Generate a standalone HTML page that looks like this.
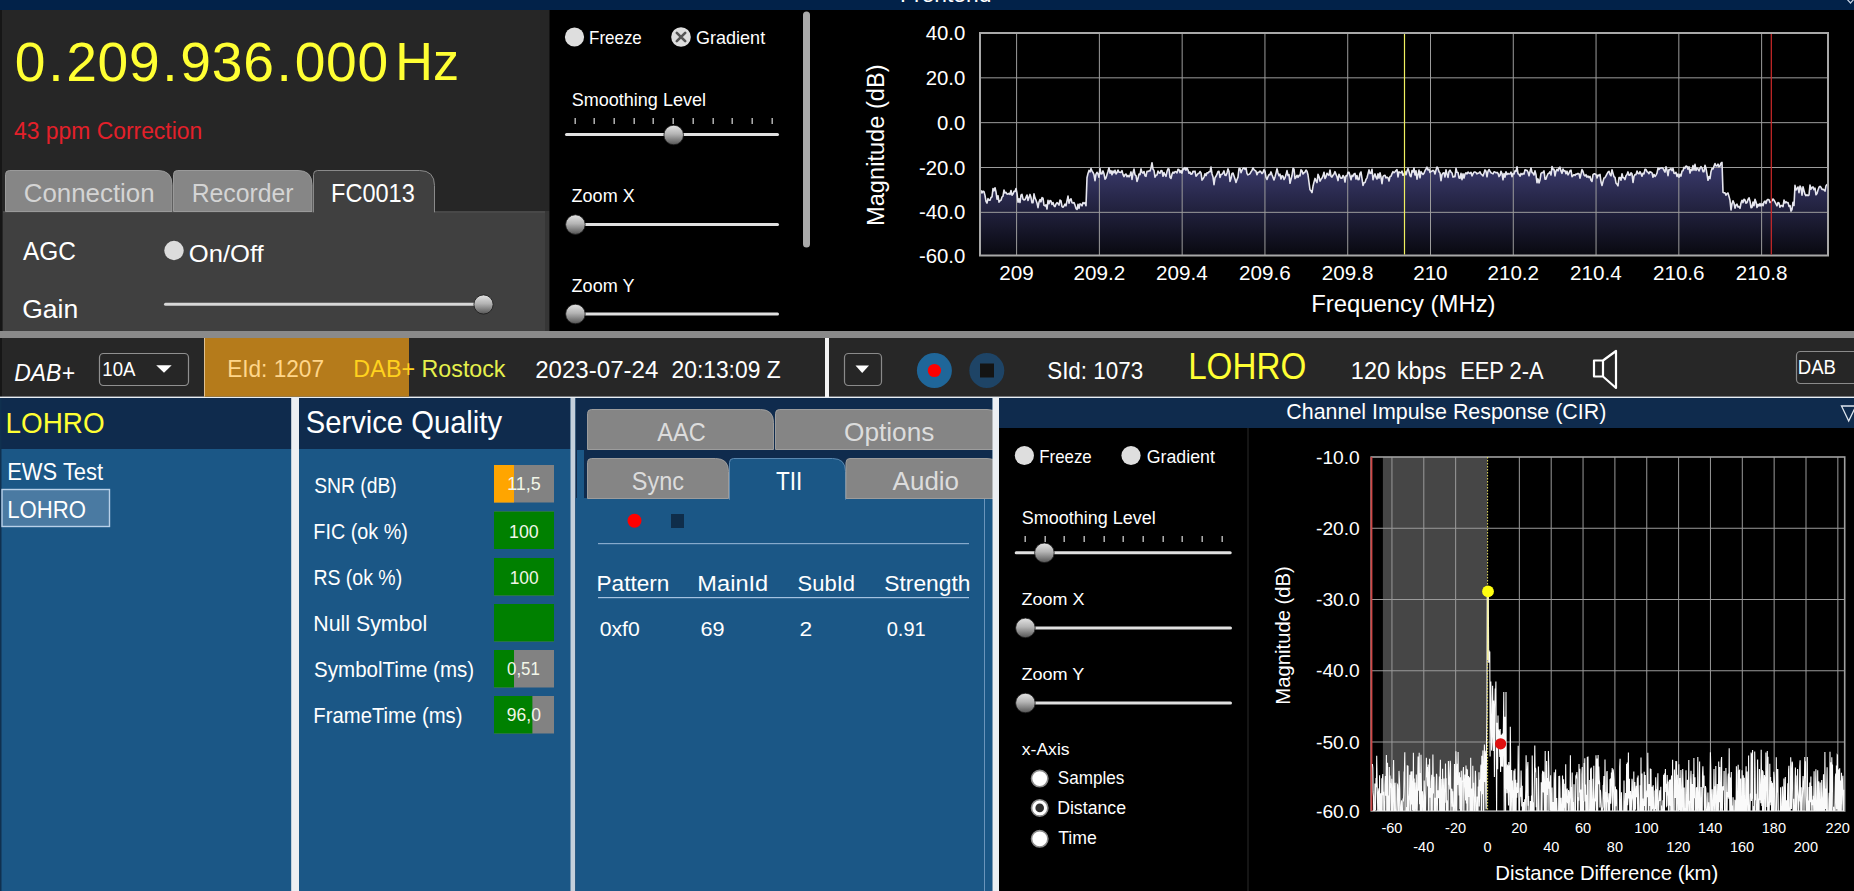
<!DOCTYPE html>
<html><head><meta charset="utf-8"><title>DAB</title>
<style>
html,body{margin:0;padding:0;background:#000;overflow:hidden;}
svg{display:block;font-family:"Liberation Sans",sans-serif;}
</style></head><body>
<svg width="1854" height="891" viewBox="0 0 1854 891">
<defs>
<linearGradient id="knob" x1="0" y1="0" x2="0" y2="1">
<stop offset="0" stop-color="#e4e4e4"/><stop offset="0.45" stop-color="#b4b4b4"/><stop offset="1" stop-color="#555555"/>
</linearGradient>
<linearGradient id="specfill" gradientUnits="userSpaceOnUse" x1="0" y1="165" x2="0" y2="256">
<stop offset="0" stop-color="#3a3a6c"/><stop offset="1" stop-color="#08080f"/>
</linearGradient>
</defs>
<rect x="0" y="0" width="1854" height="10" fill="#022249" />
<text x="900.12" y="2.00" font-size="21.80" fill="#ffffff" textLength="91.31" lengthAdjust="spacingAndGlyphs" style="">Frontend</text>
<path d="M1845,-3 L1856,-3 L1850.5,3 Z" fill="none" stroke="#c8d4e4" stroke-width="1.2"/>
<rect x="0" y="10" width="550" height="321" fill="#262626" />
<rect x="0" y="10" width="2" height="321" fill="#161616" />
<text x="30.1" y="80.6" font-size="55.2" fill="#ffff33" text-anchor="middle">0</text>
<text x="55.9" y="80.6" font-size="55.2" fill="#ffff33" text-anchor="middle">.</text>
<text x="81.5" y="80.6" font-size="55.2" fill="#ffff33" text-anchor="middle">2</text>
<text x="112.9" y="80.6" font-size="55.2" fill="#ffff33" text-anchor="middle">0</text>
<text x="144.3" y="80.6" font-size="55.2" fill="#ffff33" text-anchor="middle">9</text>
<text x="169.9" y="80.6" font-size="55.2" fill="#ffff33" text-anchor="middle">.</text>
<text x="195.7" y="80.6" font-size="55.2" fill="#ffff33" text-anchor="middle">9</text>
<text x="227.1" y="80.6" font-size="55.2" fill="#ffff33" text-anchor="middle">3</text>
<text x="258.7" y="80.6" font-size="55.2" fill="#ffff33" text-anchor="middle">6</text>
<text x="284.2" y="80.6" font-size="55.2" fill="#ffff33" text-anchor="middle">.</text>
<text x="310.0" y="80.6" font-size="55.2" fill="#ffff33" text-anchor="middle">0</text>
<text x="341.4" y="80.6" font-size="55.2" fill="#ffff33" text-anchor="middle">0</text>
<text x="372.8" y="80.6" font-size="55.2" fill="#ffff33" text-anchor="middle">0</text>
<text x="395.29" y="80.00" font-size="53.78" fill="#ffff33" textLength="63.80" lengthAdjust="spacingAndGlyphs" style="">Hz</text>
<text x="14.09" y="139.00" font-size="23.98" fill="#e3202a" textLength="188.07" lengthAdjust="spacingAndGlyphs" style="">43 ppm Correction</text>
<rect x="3" y="211" width="542" height="120" fill="#404040" />
<rect x="545" y="211" width="4.5" height="120" fill="#363636" />
<rect x="3" y="211" width="542" height="2" fill="#484848" />
<path d="M5.5,211.5 L5.5,174.5 Q5.5,170.5 9.5,170.5 L158,170.5 Q172,170.5 172,184.5 L172,211.5 Z" fill="#868686" stroke="#9a9a9a" stroke-width="1"/>
<path d="M173.5,211.5 L173.5,174.5 Q173.5,170.5 177.5,170.5 L298,170.5 Q312,170.5 312,184.5 L312,211.5 Z" fill="#868686" stroke="#9a9a9a" stroke-width="1"/>
<path d="M313.5,212 L313.5,174.5 Q313.5,170.5 317.5,170.5 L419.5,170.5 Q434.5,170.5 434.5,185.5 L434.5,212 Z" fill="#404040" stroke="#8a8a8a" stroke-width="1"/>
<rect x="314" y="209" width="120" height="5" fill="#404040" />
<text x="23.71" y="202.00" font-size="25.44" fill="#d4d4d4" textLength="130.96" lengthAdjust="spacingAndGlyphs" style="">Connection</text>
<text x="191.66" y="202.00" font-size="25.44" fill="#d4d4d4" textLength="101.93" lengthAdjust="spacingAndGlyphs" style="">Recorder</text>
<text x="331.06" y="202.00" font-size="25.44" fill="#ffffff" textLength="83.75" lengthAdjust="spacingAndGlyphs" style="">FC0013</text>
<text x="22.94" y="259.50" font-size="26.16" fill="#ffffff" textLength="52.97" lengthAdjust="spacingAndGlyphs" style="">AGC</text>
<circle cx="174" cy="250.5" r="9.7" fill="#dcdcdc" />
<text x="188.78" y="262.00" font-size="24.71" fill="#ffffff" textLength="74.95" lengthAdjust="spacingAndGlyphs" style="">On/Off</text>
<text x="22.17" y="318.20" font-size="26.02" fill="#ffffff" textLength="56.05" lengthAdjust="spacingAndGlyphs" style="">Gain</text>
<rect x="164" y="302.8" width="316" height="3" fill="#d8d8d8" rx="1.5"/>
<circle cx="483.5" cy="304.5" r="9.6" fill="url(#knob)" stroke="#1c1c1c" stroke-width="0.8"/>
<rect x="549.5" y="10" width="1304.5" height="321" fill="#000000" />
<circle cx="574.5" cy="37" r="9.6" fill="#dedede" />
<text x="589.10" y="43.80" font-size="18.31" fill="#fff" textLength="52.66" lengthAdjust="spacingAndGlyphs" style="">Freeze</text>
<circle cx="681" cy="37" r="9.8" fill="#dedede" />
<path d="M676.8,32.8 L685.2,41.2 M685.2,32.8 L676.8,41.2" stroke="#555" stroke-width="2.6" stroke-linecap="round"/>
<text x="696.10" y="43.80" font-size="18.31" fill="#fff" textLength="69.05" lengthAdjust="spacingAndGlyphs" style="">Gradient</text>
<text x="571.69" y="105.90" font-size="18.31" fill="#fff" textLength="134.32" lengthAdjust="spacingAndGlyphs" style="">Smoothing Level</text>
<rect x="574.5" y="118" width="1.4" height="6" fill="#bdbdbd" />
<rect x="593.5" y="118" width="1.4" height="6" fill="#bdbdbd" />
<rect x="613.5" y="118" width="1.4" height="6" fill="#bdbdbd" />
<rect x="633.5" y="118" width="1.4" height="6" fill="#bdbdbd" />
<rect x="652.5" y="118" width="1.4" height="6" fill="#bdbdbd" />
<rect x="672.5" y="118" width="1.4" height="6" fill="#bdbdbd" />
<rect x="692.5" y="118" width="1.4" height="6" fill="#bdbdbd" />
<rect x="712.5" y="118" width="1.4" height="6" fill="#bdbdbd" />
<rect x="731.5" y="118" width="1.4" height="6" fill="#bdbdbd" />
<rect x="751.5" y="118" width="1.4" height="6" fill="#bdbdbd" />
<rect x="771.5" y="118" width="1.4" height="6" fill="#bdbdbd" />
<rect x="565" y="133" width="214" height="3" fill="#e0e0e0" rx="1.5"/>
<circle cx="673.7" cy="135" r="9.8" fill="url(#knob)" stroke="#1c1c1c" stroke-width="0.8"/>
<text x="571.61" y="201.90" font-size="17.44" fill="#fff" textLength="63.06" lengthAdjust="spacingAndGlyphs" style="">Zoom X</text>
<rect x="575" y="223" width="204" height="3" fill="#e0e0e0" rx="1.5"/>
<circle cx="575.4" cy="224.6" r="9.8" fill="url(#knob)" stroke="#1c1c1c" stroke-width="0.8"/>
<text x="571.61" y="291.70" font-size="17.44" fill="#fff" textLength="62.80" lengthAdjust="spacingAndGlyphs" style="">Zoom Y</text>
<rect x="575" y="312.5" width="204" height="3" fill="#e0e0e0" rx="1.5"/>
<circle cx="575.4" cy="314" r="9.8" fill="url(#knob)" stroke="#1c1c1c" stroke-width="0.8"/>
<rect x="803" y="11.5" width="7" height="236" fill="#a9a9a9" rx="3.5"/>
<path d="M980.0,194.3 L981.0,190.7 L982.0,192.9 L983.0,191.2 L984.0,191.8 L985.0,195.4 L986.0,201.4 L987.0,203.1 L988.0,198.6 L989.0,200.1 L990.0,200.2 L991.0,197.5 L992.0,196.8 L993.0,188.5 L994.0,190.8 L995.0,187.7 L996.0,191.9 L997.0,199.2 L998.0,195.7 L999.0,202.1 L1000.0,200.7 L1001.0,200.3 L1002.0,197.0 L1003.0,196.1 L1004.0,190.0 L1005.0,192.9 L1006.0,192.4 L1007.0,194.0 L1008.0,194.1 L1009.0,193.4 L1010.0,194.5 L1011.0,190.5 L1012.0,195.2 L1013.0,194.0 L1014.0,191.4 L1015.0,191.5 L1016.0,188.5 L1017.0,193.3 L1018.0,202.2 L1019.0,198.8 L1020.0,202.5 L1021.0,195.2 L1022.0,194.3 L1023.0,199.1 L1024.0,200.0 L1025.0,199.6 L1026.0,197.4 L1027.0,195.0 L1028.0,200.5 L1029.0,197.5 L1030.0,194.4 L1031.0,197.6 L1032.0,202.8 L1033.0,202.6 L1034.0,193.9 L1035.0,198.1 L1036.0,200.2 L1037.0,203.1 L1038.0,207.6 L1039.0,202.1 L1040.0,199.6 L1041.0,201.8 L1042.0,197.6 L1043.0,198.2 L1044.0,205.4 L1045.0,205.9 L1046.0,204.8 L1047.0,209.0 L1048.0,200.4 L1049.0,203.7 L1050.0,200.5 L1051.0,200.9 L1052.0,204.5 L1053.0,202.5 L1054.0,205.8 L1055.0,206.6 L1056.0,204.0 L1057.0,202.6 L1058.0,203.6 L1059.0,205.2 L1060.0,200.0 L1061.0,200.9 L1062.0,206.6 L1063.0,207.2 L1064.0,205.9 L1065.0,204.2 L1066.0,205.9 L1067.0,200.8 L1068.0,196.1 L1069.0,203.2 L1070.0,199.8 L1071.0,198.8 L1072.0,202.7 L1073.0,203.0 L1074.0,202.6 L1075.0,205.1 L1076.0,208.6 L1077.0,209.5 L1078.0,204.3 L1079.0,208.4 L1080.0,203.9 L1081.0,204.3 L1082.0,205.9 L1083.0,202.5 L1084.0,203.5 L1085.0,202.7 L1086.0,205.7 L1087.0,177.8 L1088.0,173.4 L1089.0,170.4 L1090.0,171.9 L1091.0,168.5 L1092.0,171.1 L1093.0,172.4 L1094.0,174.8 L1095.0,180.6 L1096.0,174.2 L1097.0,172.3 L1098.0,173.9 L1099.0,177.2 L1100.0,168.6 L1101.0,173.9 L1102.0,173.8 L1103.0,170.9 L1104.0,173.8 L1105.0,179.1 L1106.0,178.0 L1107.0,174.5 L1108.0,171.3 L1109.0,167.8 L1110.0,173.2 L1111.0,170.7 L1112.0,174.7 L1113.0,171.0 L1114.0,172.8 L1115.0,170.3 L1116.0,173.9 L1117.0,172.6 L1118.0,170.1 L1119.0,172.1 L1120.0,172.2 L1121.0,172.4 L1122.0,170.6 L1123.0,174.6 L1124.0,176.6 L1125.0,174.6 L1126.0,174.0 L1127.0,176.7 L1128.0,175.4 L1129.0,176.8 L1130.0,175.1 L1131.0,171.9 L1132.0,179.5 L1133.0,172.7 L1134.0,169.1 L1135.0,174.9 L1136.0,175.6 L1137.0,181.4 L1138.0,178.4 L1139.0,174.0 L1140.0,174.6 L1141.0,168.9 L1142.0,172.3 L1143.0,173.1 L1144.0,171.5 L1145.0,175.8 L1146.0,176.3 L1147.0,171.3 L1148.0,171.5 L1149.0,170.8 L1150.0,170.9 L1151.0,168.0 L1152.0,162.7 L1153.0,169.2 L1154.0,170.5 L1155.0,177.2 L1156.0,175.3 L1157.0,175.0 L1158.0,171.0 L1159.0,172.9 L1160.0,173.1 L1161.0,170.6 L1162.0,170.8 L1163.0,176.3 L1164.0,172.5 L1165.0,174.8 L1166.0,176.4 L1167.0,171.6 L1168.0,168.8 L1169.0,169.0 L1170.0,177.5 L1171.0,178.4 L1172.0,174.2 L1173.0,172.2 L1174.0,173.1 L1175.0,171.6 L1176.0,171.7 L1177.0,172.9 L1178.0,169.2 L1179.0,169.8 L1180.0,172.6 L1181.0,170.6 L1182.0,173.1 L1183.0,168.5 L1184.0,169.3 L1185.0,167.7 L1186.0,170.1 L1187.0,167.9 L1188.0,170.1 L1189.0,173.3 L1190.0,172.1 L1191.0,174.3 L1192.0,174.0 L1193.0,171.4 L1194.0,171.6 L1195.0,171.1 L1196.0,176.2 L1197.0,175.1 L1198.0,173.6 L1199.0,173.4 L1200.0,171.5 L1201.0,172.9 L1202.0,180.1 L1203.0,178.8 L1204.0,177.1 L1205.0,173.7 L1206.0,175.6 L1207.0,172.9 L1208.0,172.9 L1209.0,171.7 L1210.0,171.8 L1211.0,167.0 L1212.0,173.9 L1213.0,176.9 L1214.0,184.7 L1215.0,177.8 L1216.0,176.3 L1217.0,174.2 L1218.0,171.6 L1219.0,171.4 L1220.0,177.4 L1221.0,174.5 L1222.0,174.3 L1223.0,173.0 L1224.0,170.9 L1225.0,175.2 L1226.0,175.5 L1227.0,173.0 L1228.0,168.7 L1229.0,171.5 L1230.0,181.4 L1231.0,178.6 L1232.0,173.4 L1233.0,173.1 L1234.0,176.0 L1235.0,179.1 L1236.0,182.5 L1237.0,179.5 L1238.0,177.1 L1239.0,168.5 L1240.0,168.5 L1241.0,172.6 L1242.0,170.1 L1243.0,168.5 L1244.0,167.8 L1245.0,169.4 L1246.0,168.0 L1247.0,173.6 L1248.0,174.9 L1249.0,174.4 L1250.0,173.6 L1251.0,171.8 L1252.0,170.4 L1253.0,167.8 L1254.0,169.7 L1255.0,170.5 L1256.0,171.2 L1257.0,174.8 L1258.0,172.4 L1259.0,172.2 L1260.0,171.1 L1261.0,172.0 L1262.0,173.6 L1263.0,172.4 L1264.0,169.7 L1265.0,171.5 L1266.0,177.3 L1267.0,179.5 L1268.0,176.7 L1269.0,174.6 L1270.0,174.6 L1271.0,171.9 L1272.0,174.8 L1273.0,177.4 L1274.0,180.0 L1275.0,176.9 L1276.0,173.1 L1277.0,168.8 L1278.0,172.9 L1279.0,175.7 L1280.0,174.1 L1281.0,179.0 L1282.0,175.7 L1283.0,176.3 L1284.0,179.5 L1285.0,177.9 L1286.0,174.6 L1287.0,170.6 L1288.0,175.5 L1289.0,174.6 L1290.0,183.3 L1291.0,179.2 L1292.0,175.5 L1293.0,168.3 L1294.0,169.1 L1295.0,178.6 L1296.0,177.4 L1297.0,175.3 L1298.0,177.3 L1299.0,175.4 L1300.0,175.8 L1301.0,169.7 L1302.0,170.7 L1303.0,174.0 L1304.0,172.7 L1305.0,172.1 L1306.0,170.0 L1307.0,171.2 L1308.0,175.0 L1309.0,182.3 L1310.0,189.8 L1311.0,190.8 L1312.0,192.6 L1313.0,186.3 L1314.0,182.1 L1315.0,178.4 L1316.0,180.9 L1317.0,182.6 L1318.0,174.4 L1319.0,176.5 L1320.0,181.1 L1321.0,179.3 L1322.0,178.1 L1323.0,175.9 L1324.0,172.2 L1325.0,178.5 L1326.0,176.8 L1327.0,173.2 L1328.0,174.6 L1329.0,175.3 L1330.0,170.0 L1331.0,176.3 L1332.0,177.1 L1333.0,175.2 L1334.0,173.9 L1335.0,171.7 L1336.0,174.4 L1337.0,176.7 L1338.0,180.6 L1339.0,174.2 L1340.0,176.6 L1341.0,178.3 L1342.0,178.1 L1343.0,175.6 L1344.0,176.8 L1345.0,182.0 L1346.0,175.7 L1347.0,175.9 L1348.0,172.2 L1349.0,172.2 L1350.0,175.8 L1351.0,179.7 L1352.0,175.4 L1353.0,176.3 L1354.0,173.9 L1355.0,173.4 L1356.0,179.0 L1357.0,175.6 L1358.0,179.6 L1359.0,179.5 L1360.0,173.5 L1361.0,172.0 L1362.0,178.7 L1363.0,185.4 L1364.0,182.8 L1365.0,182.5 L1366.0,179.4 L1367.0,177.8 L1368.0,173.9 L1369.0,169.9 L1370.0,173.5 L1371.0,173.3 L1372.0,169.3 L1373.0,179.7 L1374.0,176.2 L1375.0,173.9 L1376.0,177.3 L1377.0,179.0 L1378.0,173.9 L1379.0,178.1 L1380.0,172.8 L1381.0,177.2 L1382.0,183.7 L1383.0,176.5 L1384.0,175.5 L1385.0,175.4 L1386.0,177.9 L1387.0,177.3 L1388.0,177.8 L1389.0,181.0 L1390.0,176.6 L1391.0,176.3 L1392.0,173.6 L1393.0,171.7 L1394.0,172.7 L1395.0,171.7 L1396.0,170.6 L1397.0,169.7 L1398.0,176.9 L1399.0,171.9 L1400.0,172.4 L1401.0,172.8 L1402.0,171.2 L1403.0,175.3 L1404.0,174.9 L1405.0,171.4 L1406.0,174.8 L1407.0,171.1 L1408.0,168.5 L1409.0,171.6 L1410.0,175.6 L1411.0,176.7 L1412.0,170.6 L1413.0,172.0 L1414.0,168.1 L1415.0,175.0 L1416.0,170.9 L1417.0,179.1 L1418.0,174.6 L1419.0,170.1 L1420.0,177.8 L1421.0,171.6 L1422.0,173.3 L1423.0,174.4 L1424.0,173.2 L1425.0,170.7 L1426.0,169.0 L1427.0,167.2 L1428.0,170.0 L1429.0,169.1 L1430.0,172.4 L1431.0,171.4 L1432.0,171.2 L1433.0,170.4 L1434.0,171.1 L1435.0,174.0 L1436.0,170.0 L1437.0,167.0 L1438.0,168.5 L1439.0,171.7 L1440.0,172.9 L1441.0,180.7 L1442.0,174.5 L1443.0,173.1 L1444.0,172.9 L1445.0,177.0 L1446.0,169.9 L1447.0,173.9 L1448.0,177.4 L1449.0,171.5 L1450.0,170.1 L1451.0,172.1 L1452.0,173.0 L1453.0,177.1 L1454.0,176.6 L1455.0,176.7 L1456.0,168.4 L1457.0,172.3 L1458.0,172.5 L1459.0,177.9 L1460.0,178.3 L1461.0,173.4 L1462.0,179.7 L1463.0,173.9 L1464.0,178.0 L1465.0,174.0 L1466.0,172.8 L1467.0,173.9 L1468.0,172.0 L1469.0,173.1 L1470.0,173.5 L1471.0,172.3 L1472.0,175.9 L1473.0,173.9 L1474.0,172.0 L1475.0,172.0 L1476.0,172.6 L1477.0,173.9 L1478.0,173.3 L1479.0,172.9 L1480.0,171.9 L1481.0,174.0 L1482.0,174.8 L1483.0,176.0 L1484.0,173.1 L1485.0,169.9 L1486.0,171.3 L1487.0,176.8 L1488.0,171.4 L1489.0,169.5 L1490.0,171.3 L1491.0,172.8 L1492.0,173.4 L1493.0,173.9 L1494.0,171.8 L1495.0,172.0 L1496.0,172.8 L1497.0,172.4 L1498.0,173.3 L1499.0,176.6 L1500.0,175.3 L1501.0,171.3 L1502.0,173.5 L1503.0,179.8 L1504.0,173.6 L1505.0,177.1 L1506.0,171.7 L1507.0,174.6 L1508.0,173.4 L1509.0,174.1 L1510.0,173.8 L1511.0,172.1 L1512.0,176.7 L1513.0,173.5 L1514.0,173.9 L1515.0,170.9 L1516.0,171.3 L1517.0,166.9 L1518.0,173.7 L1519.0,174.3 L1520.0,176.2 L1521.0,173.4 L1522.0,174.6 L1523.0,173.4 L1524.0,174.1 L1525.0,169.8 L1526.0,170.3 L1527.0,170.4 L1528.0,172.2 L1529.0,175.7 L1530.0,171.5 L1531.0,167.9 L1532.0,172.5 L1533.0,173.2 L1534.0,175.0 L1535.0,170.9 L1536.0,174.8 L1537.0,182.7 L1538.0,178.9 L1539.0,182.9 L1540.0,180.0 L1541.0,173.3 L1542.0,172.5 L1543.0,172.6 L1544.0,170.9 L1545.0,179.1 L1546.0,179.1 L1547.0,176.0 L1548.0,173.7 L1549.0,173.3 L1550.0,171.8 L1551.0,174.9 L1552.0,166.6 L1553.0,169.5 L1554.0,169.2 L1555.0,175.9 L1556.0,171.2 L1557.0,169.3 L1558.0,170.9 L1559.0,167.9 L1560.0,167.2 L1561.0,171.2 L1562.0,173.3 L1563.0,169.0 L1564.0,171.1 L1565.0,170.8 L1566.0,173.7 L1567.0,171.2 L1568.0,174.9 L1569.0,173.1 L1570.0,170.8 L1571.0,170.2 L1572.0,176.6 L1573.0,175.6 L1574.0,174.7 L1575.0,175.4 L1576.0,174.1 L1577.0,174.2 L1578.0,173.4 L1579.0,173.8 L1580.0,178.1 L1581.0,174.0 L1582.0,169.5 L1583.0,171.4 L1584.0,174.9 L1585.0,175.9 L1586.0,174.7 L1587.0,177.1 L1588.0,176.0 L1589.0,177.6 L1590.0,176.4 L1591.0,180.3 L1592.0,181.4 L1593.0,174.7 L1594.0,173.9 L1595.0,173.9 L1596.0,174.5 L1597.0,177.9 L1598.0,175.0 L1599.0,175.7 L1600.0,174.4 L1601.0,182.0 L1602.0,185.5 L1603.0,181.6 L1604.0,178.0 L1605.0,177.7 L1606.0,175.8 L1607.0,173.8 L1608.0,172.2 L1609.0,171.3 L1610.0,174.5 L1611.0,175.8 L1612.0,169.7 L1613.0,173.4 L1614.0,176.8 L1615.0,177.4 L1616.0,183.2 L1617.0,184.1 L1618.0,185.9 L1619.0,177.5 L1620.0,177.5 L1621.0,180.2 L1622.0,173.8 L1623.0,177.6 L1624.0,177.7 L1625.0,179.6 L1626.0,175.7 L1627.0,174.5 L1628.0,171.9 L1629.0,175.2 L1630.0,175.3 L1631.0,172.8 L1632.0,173.8 L1633.0,182.5 L1634.0,176.4 L1635.0,174.5 L1636.0,174.6 L1637.0,171.1 L1638.0,173.5 L1639.0,173.8 L1640.0,171.7 L1641.0,173.6 L1642.0,176.2 L1643.0,173.2 L1644.0,173.9 L1645.0,169.2 L1646.0,169.5 L1647.0,171.7 L1648.0,172.2 L1649.0,173.7 L1650.0,171.7 L1651.0,172.2 L1652.0,172.9 L1653.0,177.2 L1654.0,174.4 L1655.0,176.5 L1656.0,175.1 L1657.0,173.1 L1658.0,168.1 L1659.0,169.4 L1660.0,168.3 L1661.0,168.0 L1662.0,167.7 L1663.0,168.4 L1664.0,170.3 L1665.0,172.1 L1666.0,166.7 L1667.0,170.1 L1668.0,175.7 L1669.0,169.5 L1670.0,169.6 L1671.0,168.5 L1672.0,170.6 L1673.0,168.4 L1674.0,173.2 L1675.0,173.5 L1676.0,172.4 L1677.0,176.4 L1678.0,174.1 L1679.0,177.3 L1680.0,174.2 L1681.0,176.1 L1682.0,171.1 L1683.0,170.8 L1684.0,167.3 L1685.0,168.2 L1686.0,166.0 L1687.0,166.4 L1688.0,169.1 L1689.0,166.8 L1690.0,173.0 L1691.0,169.2 L1692.0,170.5 L1693.0,165.6 L1694.0,170.1 L1695.0,164.3 L1696.0,170.4 L1697.0,168.0 L1698.0,168.9 L1699.0,171.0 L1700.0,168.3 L1701.0,166.7 L1702.0,167.9 L1703.0,171.6 L1704.0,171.7 L1705.0,165.3 L1706.0,168.5 L1707.0,174.2 L1708.0,180.3 L1709.0,176.6 L1710.0,178.7 L1711.0,171.7 L1712.0,168.6 L1713.0,169.0 L1714.0,166.2 L1715.0,163.5 L1716.0,165.8 L1717.0,166.0 L1718.0,164.1 L1719.0,166.6 L1720.0,166.0 L1721.0,163.1 L1722.0,162.4 L1723.0,192.3 L1724.0,192.9 L1725.0,192.8 L1726.0,195.2 L1727.0,193.6 L1728.0,193.0 L1729.0,196.4 L1730.0,200.3 L1731.0,210.0 L1732.0,203.7 L1733.0,200.8 L1734.0,203.1 L1735.0,208.2 L1736.0,204.9 L1737.0,204.2 L1738.0,206.9 L1739.0,206.6 L1740.0,208.3 L1741.0,203.0 L1742.0,200.3 L1743.0,202.6 L1744.0,199.3 L1745.0,199.9 L1746.0,203.2 L1747.0,202.5 L1748.0,199.4 L1749.0,197.8 L1750.0,201.2 L1751.0,207.6 L1752.0,207.4 L1753.0,202.0 L1754.0,205.7 L1755.0,199.4 L1756.0,202.0 L1757.0,207.5 L1758.0,204.2 L1759.0,206.0 L1760.0,203.5 L1761.0,206.0 L1762.0,203.8 L1763.0,205.7 L1764.0,202.0 L1765.0,201.1 L1766.0,203.5 L1767.0,200.1 L1768.0,199.4 L1769.0,199.8 L1770.0,202.5 L1771.0,201.8 L1772.0,200.8 L1773.0,199.0 L1774.0,200.1 L1775.0,201.8 L1776.0,203.9 L1777.0,205.8 L1778.0,202.6 L1779.0,203.0 L1780.0,207.2 L1781.0,205.6 L1782.0,205.5 L1783.0,206.7 L1784.0,200.1 L1785.0,202.9 L1786.0,201.7 L1787.0,202.7 L1788.0,202.5 L1789.0,206.4 L1790.0,205.5 L1791.0,211.2 L1792.0,209.5 L1793.0,202.2 L1794.0,205.4 L1795.0,185.4 L1796.0,189.9 L1797.0,188.6 L1798.0,187.0 L1799.0,192.6 L1800.0,186.0 L1801.0,187.8 L1802.0,195.1 L1803.0,186.8 L1804.0,190.6 L1805.0,194.3 L1806.0,195.7 L1807.0,194.7 L1808.0,195.7 L1809.0,195.0 L1810.0,185.1 L1811.0,189.2 L1812.0,187.5 L1813.0,186.9 L1814.0,189.6 L1815.0,188.1 L1816.0,194.8 L1817.0,193.5 L1818.0,190.0 L1819.0,187.2 L1820.0,186.3 L1821.0,187.3 L1822.0,189.4 L1823.0,189.3 L1824.0,189.9 L1825.0,191.1 L1826.0,185.7 L1827.0,184.6 L1828.0,186.4 L1828,255.5 L980,255.5 Z" fill="url(#specfill)"/>
<line x1="980" y1="77.834" x2="1828" y2="77.834" stroke="#9c9c9c" stroke-width="1" />
<line x1="980" y1="122.66799999999999" x2="1828" y2="122.66799999999999" stroke="#9c9c9c" stroke-width="1" />
<line x1="980" y1="167.50199999999998" x2="1828" y2="167.50199999999998" stroke="#9c9c9c" stroke-width="1" />
<line x1="980" y1="212.33599999999998" x2="1828" y2="212.33599999999998" stroke="#9c9c9c" stroke-width="1" />
<line x1="1016.6" y1="33" x2="1016.6" y2="255.5" stroke="#9c9c9c" stroke-width="1" />
<line x1="1099.3799999999953" y1="33" x2="1099.3799999999953" y2="255.5" stroke="#9c9c9c" stroke-width="1" />
<line x1="1182.1600000000024" y1="33" x2="1182.1600000000024" y2="255.5" stroke="#9c9c9c" stroke-width="1" />
<line x1="1264.9399999999978" y1="33" x2="1264.9399999999978" y2="255.5" stroke="#9c9c9c" stroke-width="1" />
<line x1="1347.7200000000048" y1="33" x2="1347.7200000000048" y2="255.5" stroke="#9c9c9c" stroke-width="1" />
<line x1="1430.5" y1="33" x2="1430.5" y2="255.5" stroke="#9c9c9c" stroke-width="1" />
<line x1="1513.2799999999952" y1="33" x2="1513.2799999999952" y2="255.5" stroke="#9c9c9c" stroke-width="1" />
<line x1="1596.0600000000022" y1="33" x2="1596.0600000000022" y2="255.5" stroke="#9c9c9c" stroke-width="1" />
<line x1="1678.8399999999976" y1="33" x2="1678.8399999999976" y2="255.5" stroke="#9c9c9c" stroke-width="1" />
<line x1="1761.620000000005" y1="33" x2="1761.620000000005" y2="255.5" stroke="#9c9c9c" stroke-width="1" />
<path d="M980.0,194.3 L981.0,190.7 L982.0,192.9 L983.0,191.2 L984.0,191.8 L985.0,195.4 L986.0,201.4 L987.0,203.1 L988.0,198.6 L989.0,200.1 L990.0,200.2 L991.0,197.5 L992.0,196.8 L993.0,188.5 L994.0,190.8 L995.0,187.7 L996.0,191.9 L997.0,199.2 L998.0,195.7 L999.0,202.1 L1000.0,200.7 L1001.0,200.3 L1002.0,197.0 L1003.0,196.1 L1004.0,190.0 L1005.0,192.9 L1006.0,192.4 L1007.0,194.0 L1008.0,194.1 L1009.0,193.4 L1010.0,194.5 L1011.0,190.5 L1012.0,195.2 L1013.0,194.0 L1014.0,191.4 L1015.0,191.5 L1016.0,188.5 L1017.0,193.3 L1018.0,202.2 L1019.0,198.8 L1020.0,202.5 L1021.0,195.2 L1022.0,194.3 L1023.0,199.1 L1024.0,200.0 L1025.0,199.6 L1026.0,197.4 L1027.0,195.0 L1028.0,200.5 L1029.0,197.5 L1030.0,194.4 L1031.0,197.6 L1032.0,202.8 L1033.0,202.6 L1034.0,193.9 L1035.0,198.1 L1036.0,200.2 L1037.0,203.1 L1038.0,207.6 L1039.0,202.1 L1040.0,199.6 L1041.0,201.8 L1042.0,197.6 L1043.0,198.2 L1044.0,205.4 L1045.0,205.9 L1046.0,204.8 L1047.0,209.0 L1048.0,200.4 L1049.0,203.7 L1050.0,200.5 L1051.0,200.9 L1052.0,204.5 L1053.0,202.5 L1054.0,205.8 L1055.0,206.6 L1056.0,204.0 L1057.0,202.6 L1058.0,203.6 L1059.0,205.2 L1060.0,200.0 L1061.0,200.9 L1062.0,206.6 L1063.0,207.2 L1064.0,205.9 L1065.0,204.2 L1066.0,205.9 L1067.0,200.8 L1068.0,196.1 L1069.0,203.2 L1070.0,199.8 L1071.0,198.8 L1072.0,202.7 L1073.0,203.0 L1074.0,202.6 L1075.0,205.1 L1076.0,208.6 L1077.0,209.5 L1078.0,204.3 L1079.0,208.4 L1080.0,203.9 L1081.0,204.3 L1082.0,205.9 L1083.0,202.5 L1084.0,203.5 L1085.0,202.7 L1086.0,205.7 L1087.0,177.8 L1088.0,173.4 L1089.0,170.4 L1090.0,171.9 L1091.0,168.5 L1092.0,171.1 L1093.0,172.4 L1094.0,174.8 L1095.0,180.6 L1096.0,174.2 L1097.0,172.3 L1098.0,173.9 L1099.0,177.2 L1100.0,168.6 L1101.0,173.9 L1102.0,173.8 L1103.0,170.9 L1104.0,173.8 L1105.0,179.1 L1106.0,178.0 L1107.0,174.5 L1108.0,171.3 L1109.0,167.8 L1110.0,173.2 L1111.0,170.7 L1112.0,174.7 L1113.0,171.0 L1114.0,172.8 L1115.0,170.3 L1116.0,173.9 L1117.0,172.6 L1118.0,170.1 L1119.0,172.1 L1120.0,172.2 L1121.0,172.4 L1122.0,170.6 L1123.0,174.6 L1124.0,176.6 L1125.0,174.6 L1126.0,174.0 L1127.0,176.7 L1128.0,175.4 L1129.0,176.8 L1130.0,175.1 L1131.0,171.9 L1132.0,179.5 L1133.0,172.7 L1134.0,169.1 L1135.0,174.9 L1136.0,175.6 L1137.0,181.4 L1138.0,178.4 L1139.0,174.0 L1140.0,174.6 L1141.0,168.9 L1142.0,172.3 L1143.0,173.1 L1144.0,171.5 L1145.0,175.8 L1146.0,176.3 L1147.0,171.3 L1148.0,171.5 L1149.0,170.8 L1150.0,170.9 L1151.0,168.0 L1152.0,162.7 L1153.0,169.2 L1154.0,170.5 L1155.0,177.2 L1156.0,175.3 L1157.0,175.0 L1158.0,171.0 L1159.0,172.9 L1160.0,173.1 L1161.0,170.6 L1162.0,170.8 L1163.0,176.3 L1164.0,172.5 L1165.0,174.8 L1166.0,176.4 L1167.0,171.6 L1168.0,168.8 L1169.0,169.0 L1170.0,177.5 L1171.0,178.4 L1172.0,174.2 L1173.0,172.2 L1174.0,173.1 L1175.0,171.6 L1176.0,171.7 L1177.0,172.9 L1178.0,169.2 L1179.0,169.8 L1180.0,172.6 L1181.0,170.6 L1182.0,173.1 L1183.0,168.5 L1184.0,169.3 L1185.0,167.7 L1186.0,170.1 L1187.0,167.9 L1188.0,170.1 L1189.0,173.3 L1190.0,172.1 L1191.0,174.3 L1192.0,174.0 L1193.0,171.4 L1194.0,171.6 L1195.0,171.1 L1196.0,176.2 L1197.0,175.1 L1198.0,173.6 L1199.0,173.4 L1200.0,171.5 L1201.0,172.9 L1202.0,180.1 L1203.0,178.8 L1204.0,177.1 L1205.0,173.7 L1206.0,175.6 L1207.0,172.9 L1208.0,172.9 L1209.0,171.7 L1210.0,171.8 L1211.0,167.0 L1212.0,173.9 L1213.0,176.9 L1214.0,184.7 L1215.0,177.8 L1216.0,176.3 L1217.0,174.2 L1218.0,171.6 L1219.0,171.4 L1220.0,177.4 L1221.0,174.5 L1222.0,174.3 L1223.0,173.0 L1224.0,170.9 L1225.0,175.2 L1226.0,175.5 L1227.0,173.0 L1228.0,168.7 L1229.0,171.5 L1230.0,181.4 L1231.0,178.6 L1232.0,173.4 L1233.0,173.1 L1234.0,176.0 L1235.0,179.1 L1236.0,182.5 L1237.0,179.5 L1238.0,177.1 L1239.0,168.5 L1240.0,168.5 L1241.0,172.6 L1242.0,170.1 L1243.0,168.5 L1244.0,167.8 L1245.0,169.4 L1246.0,168.0 L1247.0,173.6 L1248.0,174.9 L1249.0,174.4 L1250.0,173.6 L1251.0,171.8 L1252.0,170.4 L1253.0,167.8 L1254.0,169.7 L1255.0,170.5 L1256.0,171.2 L1257.0,174.8 L1258.0,172.4 L1259.0,172.2 L1260.0,171.1 L1261.0,172.0 L1262.0,173.6 L1263.0,172.4 L1264.0,169.7 L1265.0,171.5 L1266.0,177.3 L1267.0,179.5 L1268.0,176.7 L1269.0,174.6 L1270.0,174.6 L1271.0,171.9 L1272.0,174.8 L1273.0,177.4 L1274.0,180.0 L1275.0,176.9 L1276.0,173.1 L1277.0,168.8 L1278.0,172.9 L1279.0,175.7 L1280.0,174.1 L1281.0,179.0 L1282.0,175.7 L1283.0,176.3 L1284.0,179.5 L1285.0,177.9 L1286.0,174.6 L1287.0,170.6 L1288.0,175.5 L1289.0,174.6 L1290.0,183.3 L1291.0,179.2 L1292.0,175.5 L1293.0,168.3 L1294.0,169.1 L1295.0,178.6 L1296.0,177.4 L1297.0,175.3 L1298.0,177.3 L1299.0,175.4 L1300.0,175.8 L1301.0,169.7 L1302.0,170.7 L1303.0,174.0 L1304.0,172.7 L1305.0,172.1 L1306.0,170.0 L1307.0,171.2 L1308.0,175.0 L1309.0,182.3 L1310.0,189.8 L1311.0,190.8 L1312.0,192.6 L1313.0,186.3 L1314.0,182.1 L1315.0,178.4 L1316.0,180.9 L1317.0,182.6 L1318.0,174.4 L1319.0,176.5 L1320.0,181.1 L1321.0,179.3 L1322.0,178.1 L1323.0,175.9 L1324.0,172.2 L1325.0,178.5 L1326.0,176.8 L1327.0,173.2 L1328.0,174.6 L1329.0,175.3 L1330.0,170.0 L1331.0,176.3 L1332.0,177.1 L1333.0,175.2 L1334.0,173.9 L1335.0,171.7 L1336.0,174.4 L1337.0,176.7 L1338.0,180.6 L1339.0,174.2 L1340.0,176.6 L1341.0,178.3 L1342.0,178.1 L1343.0,175.6 L1344.0,176.8 L1345.0,182.0 L1346.0,175.7 L1347.0,175.9 L1348.0,172.2 L1349.0,172.2 L1350.0,175.8 L1351.0,179.7 L1352.0,175.4 L1353.0,176.3 L1354.0,173.9 L1355.0,173.4 L1356.0,179.0 L1357.0,175.6 L1358.0,179.6 L1359.0,179.5 L1360.0,173.5 L1361.0,172.0 L1362.0,178.7 L1363.0,185.4 L1364.0,182.8 L1365.0,182.5 L1366.0,179.4 L1367.0,177.8 L1368.0,173.9 L1369.0,169.9 L1370.0,173.5 L1371.0,173.3 L1372.0,169.3 L1373.0,179.7 L1374.0,176.2 L1375.0,173.9 L1376.0,177.3 L1377.0,179.0 L1378.0,173.9 L1379.0,178.1 L1380.0,172.8 L1381.0,177.2 L1382.0,183.7 L1383.0,176.5 L1384.0,175.5 L1385.0,175.4 L1386.0,177.9 L1387.0,177.3 L1388.0,177.8 L1389.0,181.0 L1390.0,176.6 L1391.0,176.3 L1392.0,173.6 L1393.0,171.7 L1394.0,172.7 L1395.0,171.7 L1396.0,170.6 L1397.0,169.7 L1398.0,176.9 L1399.0,171.9 L1400.0,172.4 L1401.0,172.8 L1402.0,171.2 L1403.0,175.3 L1404.0,174.9 L1405.0,171.4 L1406.0,174.8 L1407.0,171.1 L1408.0,168.5 L1409.0,171.6 L1410.0,175.6 L1411.0,176.7 L1412.0,170.6 L1413.0,172.0 L1414.0,168.1 L1415.0,175.0 L1416.0,170.9 L1417.0,179.1 L1418.0,174.6 L1419.0,170.1 L1420.0,177.8 L1421.0,171.6 L1422.0,173.3 L1423.0,174.4 L1424.0,173.2 L1425.0,170.7 L1426.0,169.0 L1427.0,167.2 L1428.0,170.0 L1429.0,169.1 L1430.0,172.4 L1431.0,171.4 L1432.0,171.2 L1433.0,170.4 L1434.0,171.1 L1435.0,174.0 L1436.0,170.0 L1437.0,167.0 L1438.0,168.5 L1439.0,171.7 L1440.0,172.9 L1441.0,180.7 L1442.0,174.5 L1443.0,173.1 L1444.0,172.9 L1445.0,177.0 L1446.0,169.9 L1447.0,173.9 L1448.0,177.4 L1449.0,171.5 L1450.0,170.1 L1451.0,172.1 L1452.0,173.0 L1453.0,177.1 L1454.0,176.6 L1455.0,176.7 L1456.0,168.4 L1457.0,172.3 L1458.0,172.5 L1459.0,177.9 L1460.0,178.3 L1461.0,173.4 L1462.0,179.7 L1463.0,173.9 L1464.0,178.0 L1465.0,174.0 L1466.0,172.8 L1467.0,173.9 L1468.0,172.0 L1469.0,173.1 L1470.0,173.5 L1471.0,172.3 L1472.0,175.9 L1473.0,173.9 L1474.0,172.0 L1475.0,172.0 L1476.0,172.6 L1477.0,173.9 L1478.0,173.3 L1479.0,172.9 L1480.0,171.9 L1481.0,174.0 L1482.0,174.8 L1483.0,176.0 L1484.0,173.1 L1485.0,169.9 L1486.0,171.3 L1487.0,176.8 L1488.0,171.4 L1489.0,169.5 L1490.0,171.3 L1491.0,172.8 L1492.0,173.4 L1493.0,173.9 L1494.0,171.8 L1495.0,172.0 L1496.0,172.8 L1497.0,172.4 L1498.0,173.3 L1499.0,176.6 L1500.0,175.3 L1501.0,171.3 L1502.0,173.5 L1503.0,179.8 L1504.0,173.6 L1505.0,177.1 L1506.0,171.7 L1507.0,174.6 L1508.0,173.4 L1509.0,174.1 L1510.0,173.8 L1511.0,172.1 L1512.0,176.7 L1513.0,173.5 L1514.0,173.9 L1515.0,170.9 L1516.0,171.3 L1517.0,166.9 L1518.0,173.7 L1519.0,174.3 L1520.0,176.2 L1521.0,173.4 L1522.0,174.6 L1523.0,173.4 L1524.0,174.1 L1525.0,169.8 L1526.0,170.3 L1527.0,170.4 L1528.0,172.2 L1529.0,175.7 L1530.0,171.5 L1531.0,167.9 L1532.0,172.5 L1533.0,173.2 L1534.0,175.0 L1535.0,170.9 L1536.0,174.8 L1537.0,182.7 L1538.0,178.9 L1539.0,182.9 L1540.0,180.0 L1541.0,173.3 L1542.0,172.5 L1543.0,172.6 L1544.0,170.9 L1545.0,179.1 L1546.0,179.1 L1547.0,176.0 L1548.0,173.7 L1549.0,173.3 L1550.0,171.8 L1551.0,174.9 L1552.0,166.6 L1553.0,169.5 L1554.0,169.2 L1555.0,175.9 L1556.0,171.2 L1557.0,169.3 L1558.0,170.9 L1559.0,167.9 L1560.0,167.2 L1561.0,171.2 L1562.0,173.3 L1563.0,169.0 L1564.0,171.1 L1565.0,170.8 L1566.0,173.7 L1567.0,171.2 L1568.0,174.9 L1569.0,173.1 L1570.0,170.8 L1571.0,170.2 L1572.0,176.6 L1573.0,175.6 L1574.0,174.7 L1575.0,175.4 L1576.0,174.1 L1577.0,174.2 L1578.0,173.4 L1579.0,173.8 L1580.0,178.1 L1581.0,174.0 L1582.0,169.5 L1583.0,171.4 L1584.0,174.9 L1585.0,175.9 L1586.0,174.7 L1587.0,177.1 L1588.0,176.0 L1589.0,177.6 L1590.0,176.4 L1591.0,180.3 L1592.0,181.4 L1593.0,174.7 L1594.0,173.9 L1595.0,173.9 L1596.0,174.5 L1597.0,177.9 L1598.0,175.0 L1599.0,175.7 L1600.0,174.4 L1601.0,182.0 L1602.0,185.5 L1603.0,181.6 L1604.0,178.0 L1605.0,177.7 L1606.0,175.8 L1607.0,173.8 L1608.0,172.2 L1609.0,171.3 L1610.0,174.5 L1611.0,175.8 L1612.0,169.7 L1613.0,173.4 L1614.0,176.8 L1615.0,177.4 L1616.0,183.2 L1617.0,184.1 L1618.0,185.9 L1619.0,177.5 L1620.0,177.5 L1621.0,180.2 L1622.0,173.8 L1623.0,177.6 L1624.0,177.7 L1625.0,179.6 L1626.0,175.7 L1627.0,174.5 L1628.0,171.9 L1629.0,175.2 L1630.0,175.3 L1631.0,172.8 L1632.0,173.8 L1633.0,182.5 L1634.0,176.4 L1635.0,174.5 L1636.0,174.6 L1637.0,171.1 L1638.0,173.5 L1639.0,173.8 L1640.0,171.7 L1641.0,173.6 L1642.0,176.2 L1643.0,173.2 L1644.0,173.9 L1645.0,169.2 L1646.0,169.5 L1647.0,171.7 L1648.0,172.2 L1649.0,173.7 L1650.0,171.7 L1651.0,172.2 L1652.0,172.9 L1653.0,177.2 L1654.0,174.4 L1655.0,176.5 L1656.0,175.1 L1657.0,173.1 L1658.0,168.1 L1659.0,169.4 L1660.0,168.3 L1661.0,168.0 L1662.0,167.7 L1663.0,168.4 L1664.0,170.3 L1665.0,172.1 L1666.0,166.7 L1667.0,170.1 L1668.0,175.7 L1669.0,169.5 L1670.0,169.6 L1671.0,168.5 L1672.0,170.6 L1673.0,168.4 L1674.0,173.2 L1675.0,173.5 L1676.0,172.4 L1677.0,176.4 L1678.0,174.1 L1679.0,177.3 L1680.0,174.2 L1681.0,176.1 L1682.0,171.1 L1683.0,170.8 L1684.0,167.3 L1685.0,168.2 L1686.0,166.0 L1687.0,166.4 L1688.0,169.1 L1689.0,166.8 L1690.0,173.0 L1691.0,169.2 L1692.0,170.5 L1693.0,165.6 L1694.0,170.1 L1695.0,164.3 L1696.0,170.4 L1697.0,168.0 L1698.0,168.9 L1699.0,171.0 L1700.0,168.3 L1701.0,166.7 L1702.0,167.9 L1703.0,171.6 L1704.0,171.7 L1705.0,165.3 L1706.0,168.5 L1707.0,174.2 L1708.0,180.3 L1709.0,176.6 L1710.0,178.7 L1711.0,171.7 L1712.0,168.6 L1713.0,169.0 L1714.0,166.2 L1715.0,163.5 L1716.0,165.8 L1717.0,166.0 L1718.0,164.1 L1719.0,166.6 L1720.0,166.0 L1721.0,163.1 L1722.0,162.4 L1723.0,192.3 L1724.0,192.9 L1725.0,192.8 L1726.0,195.2 L1727.0,193.6 L1728.0,193.0 L1729.0,196.4 L1730.0,200.3 L1731.0,210.0 L1732.0,203.7 L1733.0,200.8 L1734.0,203.1 L1735.0,208.2 L1736.0,204.9 L1737.0,204.2 L1738.0,206.9 L1739.0,206.6 L1740.0,208.3 L1741.0,203.0 L1742.0,200.3 L1743.0,202.6 L1744.0,199.3 L1745.0,199.9 L1746.0,203.2 L1747.0,202.5 L1748.0,199.4 L1749.0,197.8 L1750.0,201.2 L1751.0,207.6 L1752.0,207.4 L1753.0,202.0 L1754.0,205.7 L1755.0,199.4 L1756.0,202.0 L1757.0,207.5 L1758.0,204.2 L1759.0,206.0 L1760.0,203.5 L1761.0,206.0 L1762.0,203.8 L1763.0,205.7 L1764.0,202.0 L1765.0,201.1 L1766.0,203.5 L1767.0,200.1 L1768.0,199.4 L1769.0,199.8 L1770.0,202.5 L1771.0,201.8 L1772.0,200.8 L1773.0,199.0 L1774.0,200.1 L1775.0,201.8 L1776.0,203.9 L1777.0,205.8 L1778.0,202.6 L1779.0,203.0 L1780.0,207.2 L1781.0,205.6 L1782.0,205.5 L1783.0,206.7 L1784.0,200.1 L1785.0,202.9 L1786.0,201.7 L1787.0,202.7 L1788.0,202.5 L1789.0,206.4 L1790.0,205.5 L1791.0,211.2 L1792.0,209.5 L1793.0,202.2 L1794.0,205.4 L1795.0,185.4 L1796.0,189.9 L1797.0,188.6 L1798.0,187.0 L1799.0,192.6 L1800.0,186.0 L1801.0,187.8 L1802.0,195.1 L1803.0,186.8 L1804.0,190.6 L1805.0,194.3 L1806.0,195.7 L1807.0,194.7 L1808.0,195.7 L1809.0,195.0 L1810.0,185.1 L1811.0,189.2 L1812.0,187.5 L1813.0,186.9 L1814.0,189.6 L1815.0,188.1 L1816.0,194.8 L1817.0,193.5 L1818.0,190.0 L1819.0,187.2 L1820.0,186.3 L1821.0,187.3 L1822.0,189.4 L1823.0,189.3 L1824.0,189.9 L1825.0,191.1 L1826.0,185.7 L1827.0,184.6 L1828.0,186.4" fill="none" stroke="#e6e6ee" stroke-width="1.6" stroke-linejoin="round"/>
<rect x="980" y="33" width="848" height="222.5" fill="none" stroke="#a8a8a8" stroke-width="2"/>
<line x1="1404.5" y1="34" x2="1404.5" y2="254.5" stroke="#f0f060" stroke-width="1.2" />
<line x1="1771.3" y1="34" x2="1771.3" y2="254.5" stroke="#d02a2a" stroke-width="1.2" />
<text x="925.68" y="40.00" font-size="20.35" fill="#fff" textLength="39.61" lengthAdjust="spacingAndGlyphs" style="">40.0</text>
<text x="925.68" y="85.00" font-size="20.35" fill="#fff" textLength="39.61" lengthAdjust="spacingAndGlyphs" style="">20.0</text>
<text x="936.98" y="129.50" font-size="20.35" fill="#fff" textLength="28.29" lengthAdjust="spacingAndGlyphs" style="">0.0</text>
<text x="918.92" y="174.50" font-size="20.35" fill="#fff" textLength="46.38" lengthAdjust="spacingAndGlyphs" style="">-20.0</text>
<text x="918.92" y="219.30" font-size="20.35" fill="#fff" textLength="46.38" lengthAdjust="spacingAndGlyphs" style="">-40.0</text>
<text x="918.92" y="263.00" font-size="20.35" fill="#fff" textLength="46.38" lengthAdjust="spacingAndGlyphs" style="">-60.0</text>
<text x="999.34" y="279.60" font-size="20.64" fill="#fff" textLength="34.44" lengthAdjust="spacingAndGlyphs" style="">209</text>
<text x="1073.55" y="279.60" font-size="20.64" fill="#fff" textLength="51.65" lengthAdjust="spacingAndGlyphs" style="">209.2</text>
<text x="1156.10" y="279.60" font-size="20.64" fill="#fff" textLength="51.65" lengthAdjust="spacingAndGlyphs" style="">209.4</text>
<text x="1239.04" y="279.60" font-size="20.64" fill="#fff" textLength="51.65" lengthAdjust="spacingAndGlyphs" style="">209.6</text>
<text x="1321.82" y="279.60" font-size="20.64" fill="#fff" textLength="51.65" lengthAdjust="spacingAndGlyphs" style="">209.8</text>
<text x="1413.16" y="279.60" font-size="20.64" fill="#fff" textLength="34.44" lengthAdjust="spacingAndGlyphs" style="">210</text>
<text x="1487.45" y="279.60" font-size="20.64" fill="#fff" textLength="51.65" lengthAdjust="spacingAndGlyphs" style="">210.2</text>
<text x="1570.00" y="279.60" font-size="20.64" fill="#fff" textLength="51.65" lengthAdjust="spacingAndGlyphs" style="">210.4</text>
<text x="1652.94" y="279.60" font-size="20.64" fill="#fff" textLength="51.65" lengthAdjust="spacingAndGlyphs" style="">210.6</text>
<text x="1735.72" y="279.60" font-size="20.64" fill="#fff" textLength="51.65" lengthAdjust="spacingAndGlyphs" style="">210.8</text>
<text transform="translate(884.00,224.00) rotate(-90)" x="-1.95" y="0" font-size="24.42" fill="#fff" textLength="161.46" lengthAdjust="spacingAndGlyphs" style="">Magnitude (dB)</text>
<text x="1311.13" y="311.70" font-size="23.84" fill="#fff" textLength="184.43" lengthAdjust="spacingAndGlyphs" style="">Frequency (MHz)</text>
<rect x="0" y="331" width="1854" height="7" fill="#8a8a8a" />
<rect x="0" y="338" width="1854" height="59" fill="#272727" />
<rect x="0" y="338" width="2" height="59" fill="#161616" />
<rect x="0" y="396.6" width="1854" height="1.6" fill="#e8eef4" />
<text x="14.31" y="380.80" font-size="23.84" fill="#ffffff" textLength="60.49" lengthAdjust="spacingAndGlyphs" style="font-style:italic;">DAB+</text>
<rect x="99.5" y="353.5" width="89" height="32" rx="4" fill="#262626" stroke="#909090" stroke-width="1.2"/>
<text x="102.30" y="376.10" font-size="20.20" fill="#ffffff" textLength="33.13" lengthAdjust="spacingAndGlyphs" style="">10A</text>
<path d="M156.2,365.3 L171.7,365.3 L164,372.8 Z" fill="#ffffff"/>
<rect x="204" y="338" width="205" height="58.6" fill="#b57b1b" />
<rect x="204" y="338" width="1" height="58.6" fill="#e0c090" />
<text x="227.13" y="377.30" font-size="23.84" fill="#ffd68a" textLength="96.93" lengthAdjust="spacingAndGlyphs" style="">EId: 1207</text>
<text x="353.37" y="377.30" font-size="23.84" fill="#ffd21e" textLength="61.81" lengthAdjust="spacingAndGlyphs" style="">DAB+</text>
<text x="421.58" y="377.30" font-size="23.84" fill="#e6f04c" textLength="83.91" lengthAdjust="spacingAndGlyphs" style="">Rostock</text>
<text x="535.20" y="377.60" font-size="23.84" fill="#ffffff" textLength="123.18" lengthAdjust="spacingAndGlyphs" style="">2023-07-24</text>
<text x="671.56" y="377.60" font-size="23.84" fill="#ffffff" textLength="109.06" lengthAdjust="spacingAndGlyphs" style="">20:13:09 Z</text>
<rect x="825" y="338" width="4" height="59" fill="#f4f4f4" />
<rect x="844.5" y="353.5" width="37" height="32" rx="4" fill="#262626" stroke="#8a8a8a" stroke-width="1.2"/>
<path d="M855.5,365.5 L869,365.5 L862.2,373 Z" fill="#ffffff"/>
<circle cx="934.4" cy="370.5" r="17.5" fill="#1f6699" />
<circle cx="934.4" cy="370.5" r="6.6" fill="#ff0000" />
<circle cx="986.8" cy="370.5" r="17.5" fill="#1e4466" />
<rect x="980" y="363.5" width="14" height="14" fill="#141414" />
<text x="1047.19" y="378.80" font-size="23.84" fill="#fff" textLength="95.99" lengthAdjust="spacingAndGlyphs" style="">SId: 1073</text>
<text x="1188.16" y="379.20" font-size="37.79" fill="#ffff33" textLength="118.06" lengthAdjust="spacingAndGlyphs" style="">LOHRO</text>
<text x="1350.83" y="378.50" font-size="24.42" fill="#fff" textLength="95.52" lengthAdjust="spacingAndGlyphs" style="">120 kbps</text>
<text x="1460.20" y="378.50" font-size="24.42" fill="#fff" textLength="83.45" lengthAdjust="spacingAndGlyphs" style="">EEP 2-A</text>
<path d="M1594,360.5 L1603,360.5 L1616,351 L1616,388 L1603,376.5 L1594,376.5 Z M1603,360.5 L1603,376.5" fill="none" stroke="#ffffff" stroke-width="2.2" stroke-linejoin="round"/>
<rect x="1796.5" y="351.5" width="70" height="32" rx="4" fill="#262626" stroke="#8a8a8a" stroke-width="1.2"/>
<text x="1797.77" y="374.00" font-size="19.33" fill="#fff" textLength="38.18" lengthAdjust="spacingAndGlyphs" style="">DAB</text>
<rect x="0" y="398" width="1854" height="493" fill="#1b5786" />
<rect x="0" y="398" width="292" height="51" fill="#0f2b4d" />
<rect x="0" y="398" width="1.5" height="493" fill="#10304f" />
<text x="5.50" y="432.60" font-size="29.51" fill="#ffff33" textLength="99.06" lengthAdjust="spacingAndGlyphs" style="">LOHRO</text>
<text x="7.19" y="479.60" font-size="23.84" fill="#fff" textLength="95.96" lengthAdjust="spacingAndGlyphs" style="">EWS Test</text>
<rect x="2" y="489.5" width="107.5" height="37" fill="#4a7aa2" stroke="#b8d0e8" stroke-width="1.4"/>
<text x="7.17" y="517.50" font-size="23.84" fill="#fff" textLength="78.81" lengthAdjust="spacingAndGlyphs" style="">LOHRO</text>
<rect x="291.2" y="398" width="7.8" height="493" fill="#eceff3" />
<rect x="299" y="398" width="271.5" height="51" fill="#0f2b4d" />
<text x="305.69" y="433.00" font-size="30.52" fill="#fff" textLength="196.38" lengthAdjust="spacingAndGlyphs" style="">Service Quality</text>
<text x="314.13" y="493.10" font-size="21.51" fill="#fff" textLength="82.65" lengthAdjust="spacingAndGlyphs" style="">SNR (dB)</text>
<rect x="494" y="465" width="60" height="37.5" fill="#828282" />
<rect x="494" y="465" width="20" height="37.5" fill="#ffa500" />
<text x="507.15" y="490.40" font-size="17.44" fill="#f2f6e8" textLength="33.60" lengthAdjust="spacingAndGlyphs" style="">11,5</text>
<text x="313.37" y="538.50" font-size="21.51" fill="#fff" textLength="94.53" lengthAdjust="spacingAndGlyphs" style="">FIC (ok %)</text>
<rect x="494" y="511.5" width="60" height="37.5" fill="#828282" />
<rect x="494" y="511.5" width="60" height="37.5" fill="#008000" />
<text x="509.06" y="537.60" font-size="17.44" fill="#f2f6e8" textLength="29.72" lengthAdjust="spacingAndGlyphs" style="">100</text>
<text x="313.39" y="584.80" font-size="21.51" fill="#fff" textLength="88.80" lengthAdjust="spacingAndGlyphs" style="">RS (ok %)</text>
<rect x="494" y="558" width="60" height="37.5" fill="#828282" />
<rect x="494" y="558" width="60" height="37.5" fill="#008000" />
<text x="509.70" y="583.70" font-size="17.44" fill="#f2f6e8" textLength="28.97" lengthAdjust="spacingAndGlyphs" style="">100</text>
<text x="313.24" y="630.80" font-size="21.51" fill="#fff" textLength="113.91" lengthAdjust="spacingAndGlyphs" style="">Null Symbol</text>
<rect x="494" y="604" width="60" height="37.5" fill="#828282" />
<rect x="494" y="604" width="60" height="37.5" fill="#008000" />
<text x="314.08" y="676.90" font-size="21.51" fill="#fff" textLength="160.09" lengthAdjust="spacingAndGlyphs" style="">SymbolTime (ms)</text>
<rect x="494" y="650" width="60" height="37.5" fill="#828282" />
<rect x="494" y="650" width="20" height="37.5" fill="#008000" />
<text x="507.02" y="674.60" font-size="17.44" fill="#f2f6e8" textLength="32.90" lengthAdjust="spacingAndGlyphs" style="">0,51</text>
<text x="313.33" y="722.90" font-size="21.51" fill="#fff" textLength="149.12" lengthAdjust="spacingAndGlyphs" style="">FrameTime (ms)</text>
<rect x="494" y="696" width="60" height="37.5" fill="#828282" />
<rect x="494" y="696" width="38.39999999999998" height="37.5" fill="#008000" />
<text x="506.87" y="721.10" font-size="17.44" fill="#f2f6e8" textLength="34.01" lengthAdjust="spacingAndGlyphs" style="">96,0</text>
<rect x="570.5" y="398" width="5" height="493" fill="#c4d0dc" />
<rect x="575.5" y="398" width="417" height="493" fill="#0f2b4d" />
<rect x="575.5" y="498" width="417" height="393" fill="#1b5786" />
<rect x="577" y="450" width="7" height="48" fill="#1b5786" />
<path d="M587.5,449.5 L587.5,413.5 Q587.5,409.5 591.5,409.5 L760.5,409.5 Q773.5,409.5 773.5,422.5 L773.5,449.5 Z" fill="#858585" stroke="#9c9c9c" stroke-width="1"/>
<path d="M775.5,449.5 L775.5,413.5 Q775.5,409.5 779.5,409.5 L987,409.5 Q1000,409.5 1000,422.5 L1000,449.5 Z" fill="#858585" stroke="#9c9c9c" stroke-width="1"/>
<path d="M587.5,498.5 L587.5,462.5 Q587.5,458.5 591.5,458.5 L715.5,458.5 Q728.5,458.5 728.5,471.5 L728.5,498.5 Z" fill="#858585" stroke="#9c9c9c" stroke-width="1"/>
<path d="M729.5,499.5 L729.5,462.5 Q729.5,458.5 733.5,458.5 L832.5,458.5 Q845.5,458.5 845.5,471.5 L845.5,499.5 Z" fill="#1b5786" stroke="#5a88b0" stroke-width="1"/>
<rect x="730" y="497" width="115" height="4" fill="#1b5786" />
<path d="M846,498.5 L846,462.5 Q846,458.5 850,458.5 L987,458.5 Q1000,458.5 1000,471.5 L1000,498.5 Z" fill="#858585" stroke="#9c9c9c" stroke-width="1"/>
<text x="657.24" y="440.60" font-size="25.58" fill="#dcdcdc" textLength="48.41" lengthAdjust="spacingAndGlyphs" style="">AAC</text>
<text x="844.05" y="440.60" font-size="25.58" fill="#dcdcdc" textLength="90.33" lengthAdjust="spacingAndGlyphs" style="">Options</text>
<text x="631.84" y="489.90" font-size="25.58" fill="#dcdcdc" textLength="52.22" lengthAdjust="spacingAndGlyphs" style="">Sync</text>
<text x="775.99" y="489.90" font-size="25.58" fill="#ffffff" textLength="26.33" lengthAdjust="spacingAndGlyphs" style="">TII</text>
<text x="892.64" y="489.90" font-size="25.58" fill="#dcdcdc" textLength="66.41" lengthAdjust="spacingAndGlyphs" style="">Audio</text>
<rect x="984" y="499" width="1" height="392" fill="#6a94bb" />
<circle cx="634.5" cy="520.8" r="7" fill="#ff0000" />
<rect x="671" y="514" width="13" height="14" fill="#0f2d4a" />
<rect x="598" y="543" width="371" height="1.2" fill="#86aacc" />
<text x="596.53" y="590.60" font-size="22.97" fill="#fff" textLength="72.92" lengthAdjust="spacingAndGlyphs" style="">Pattern</text>
<text x="697.35" y="590.60" font-size="22.97" fill="#fff" textLength="70.86" lengthAdjust="spacingAndGlyphs" style="">MainId</text>
<text x="797.61" y="590.60" font-size="22.97" fill="#fff" textLength="57.38" lengthAdjust="spacingAndGlyphs" style="">SubId</text>
<text x="884.27" y="590.60" font-size="22.97" fill="#fff" textLength="86.16" lengthAdjust="spacingAndGlyphs" style="">Strength</text>
<rect x="598" y="597" width="371" height="1.2" fill="#a4c2e0" />
<text x="599.65" y="635.50" font-size="19.77" fill="#fff" textLength="40.05" lengthAdjust="spacingAndGlyphs" style="">0xf0</text>
<text x="700.42" y="635.50" font-size="19.77" fill="#fff" textLength="24.11" lengthAdjust="spacingAndGlyphs" style="">69</text>
<text x="799.56" y="635.50" font-size="19.77" fill="#fff" textLength="12.71" lengthAdjust="spacingAndGlyphs" style="">2</text>
<text x="886.70" y="635.50" font-size="19.77" fill="#fff" textLength="39.08" lengthAdjust="spacingAndGlyphs" style="">0.91</text>
<rect x="992.5" y="398" width="6.8" height="493" fill="#eceff3" />
<rect x="999" y="398" width="855" height="30" fill="#0f2b4d" />
<text x="1286.33" y="419.30" font-size="21.22" fill="#fff" textLength="319.99" lengthAdjust="spacingAndGlyphs" style="">Channel Impulse Response (CIR)</text>
<path d="M1841.5,406 L1856,406 L1848.7,421 Z" fill="none" stroke="#dfe6ee" stroke-width="1.3"/>
<rect x="999" y="428" width="855" height="463" fill="#000000" />
<rect x="1247.5" y="428" width="1" height="463" fill="#2a2a2a" />
<circle cx="1024.4" cy="455.5" r="9.6" fill="#dedede" />
<text x="1039.31" y="462.90" font-size="17.73" fill="#fff" textLength="52.45" lengthAdjust="spacingAndGlyphs" style="">Freeze</text>
<circle cx="1131" cy="455.5" r="9.6" fill="#dedede" />
<text x="1146.71" y="462.90" font-size="17.73" fill="#fff" textLength="68.13" lengthAdjust="spacingAndGlyphs" style="">Gradient</text>
<text x="1021.79" y="523.80" font-size="18.02" fill="#fff" textLength="133.91" lengthAdjust="spacingAndGlyphs" style="">Smoothing Level</text>
<rect x="1024.5" y="536" width="1.4" height="6" fill="#bdbdbd" />
<rect x="1044.5" y="536" width="1.4" height="6" fill="#bdbdbd" />
<rect x="1063.5" y="536" width="1.4" height="6" fill="#bdbdbd" />
<rect x="1083.5" y="536" width="1.4" height="6" fill="#bdbdbd" />
<rect x="1103.5" y="536" width="1.4" height="6" fill="#bdbdbd" />
<rect x="1122.5" y="536" width="1.4" height="6" fill="#bdbdbd" />
<rect x="1142.5" y="536" width="1.4" height="6" fill="#bdbdbd" />
<rect x="1162.5" y="536" width="1.4" height="6" fill="#bdbdbd" />
<rect x="1181.5" y="536" width="1.4" height="6" fill="#bdbdbd" />
<rect x="1201.5" y="536" width="1.4" height="6" fill="#bdbdbd" />
<rect x="1221.5" y="536" width="1.4" height="6" fill="#bdbdbd" />
<rect x="1014.7" y="551.3" width="217" height="3" fill="#e0e0e0" rx="1.5"/>
<circle cx="1044.4" cy="552.8" r="9.8" fill="url(#knob)" stroke="#1c1c1c" stroke-width="0.8"/>
<text x="1021.52" y="605.40" font-size="17.15" fill="#fff" textLength="62.86" lengthAdjust="spacingAndGlyphs" style="">Zoom X</text>
<rect x="1025" y="626.4" width="207" height="3" fill="#e0e0e0" rx="1.5"/>
<circle cx="1025.4" cy="627.9" r="9.8" fill="url(#knob)" stroke="#1c1c1c" stroke-width="0.8"/>
<text x="1021.41" y="680.00" font-size="17.15" fill="#fff" textLength="63.00" lengthAdjust="spacingAndGlyphs" style="">Zoom Y</text>
<rect x="1025" y="701.5" width="207" height="3" fill="#e0e0e0" rx="1.5"/>
<circle cx="1025.4" cy="703" r="9.8" fill="url(#knob)" stroke="#1c1c1c" stroke-width="0.8"/>
<text x="1021.78" y="754.80" font-size="17.15" fill="#fff" textLength="47.83" lengthAdjust="spacingAndGlyphs" style="">x-Axis</text>
<circle cx="1039.7" cy="778.6" r="8.2" fill="#ffffff" stroke="#8a8a8a" stroke-width="1.6"/>
<text x="1057.83" y="784.40" font-size="17.73" fill="#fff" textLength="66.48" lengthAdjust="spacingAndGlyphs" style="">Samples</text>
<circle cx="1039.7" cy="807.9" r="8.2" fill="#ffffff" stroke="#8a8a8a" stroke-width="1.6"/>
<circle cx="1039.7" cy="807.9" r="4.3" fill="#303030" />
<text x="1057.14" y="814.40" font-size="17.73" fill="#fff" textLength="68.93" lengthAdjust="spacingAndGlyphs" style="">Distance</text>
<circle cx="1039.7" cy="838.8" r="8.2" fill="#ffffff" stroke="#8a8a8a" stroke-width="1.6"/>
<text x="1058.20" y="844.30" font-size="17.73" fill="#fff" textLength="38.55" lengthAdjust="spacingAndGlyphs" style="">Time</text>
<rect x="1382.9" y="457" width="104.5" height="354" fill="#464646" />
<line x1="1371.2" y1="528.25" x2="1844.7" y2="528.25" stroke="#9a9a9a" stroke-width="1" />
<line x1="1371.2" y1="599.5" x2="1844.7" y2="599.5" stroke="#9a9a9a" stroke-width="1" />
<line x1="1371.2" y1="670.75" x2="1844.7" y2="670.75" stroke="#9a9a9a" stroke-width="1" />
<line x1="1371.2" y1="742.0" x2="1844.7" y2="742.0" stroke="#9a9a9a" stroke-width="1" />
<line x1="1391.95" y1="457" x2="1391.95" y2="811" stroke="#9a9a9a" stroke-width="1" />
<line x1="1423.8" y1="457" x2="1423.8" y2="811" stroke="#9a9a9a" stroke-width="1" />
<line x1="1455.65" y1="457" x2="1455.65" y2="811" stroke="#9a9a9a" stroke-width="1" />
<line x1="1519.35" y1="457" x2="1519.35" y2="811" stroke="#9a9a9a" stroke-width="1" />
<line x1="1551.2" y1="457" x2="1551.2" y2="811" stroke="#9a9a9a" stroke-width="1" />
<line x1="1583.05" y1="457" x2="1583.05" y2="811" stroke="#9a9a9a" stroke-width="1" />
<line x1="1614.9" y1="457" x2="1614.9" y2="811" stroke="#9a9a9a" stroke-width="1" />
<line x1="1646.75" y1="457" x2="1646.75" y2="811" stroke="#9a9a9a" stroke-width="1" />
<line x1="1678.6" y1="457" x2="1678.6" y2="811" stroke="#9a9a9a" stroke-width="1" />
<line x1="1710.45" y1="457" x2="1710.45" y2="811" stroke="#9a9a9a" stroke-width="1" />
<line x1="1742.3" y1="457" x2="1742.3" y2="811" stroke="#9a9a9a" stroke-width="1" />
<line x1="1774.15" y1="457" x2="1774.15" y2="811" stroke="#9a9a9a" stroke-width="1" />
<line x1="1806.0" y1="457" x2="1806.0" y2="811" stroke="#9a9a9a" stroke-width="1" />
<line x1="1837.85" y1="457" x2="1837.85" y2="811" stroke="#9a9a9a" stroke-width="1" />
<rect x="1371.2" y="457" width="473.5" height="354" fill="none" stroke="#a0a0a0" stroke-width="1.6"/>
<line x1="1371.5" y1="457" x2="1371.5" y2="811" stroke="#d04848" stroke-width="1.8" />
<clipPath id="circlip"><rect x="1371.2" y="457" width="473.5" height="354"/></clipPath>
<path d="M1372.4,764.0 L1372.8,767.9 L1373.1,791.9 L1373.5,796.4 L1373.8,820.4 L1374.2,820.4 L1374.6,820.4 L1374.9,783.4 L1375.3,797.7 L1375.6,810.3 L1376.0,777.9 L1376.4,787.2 L1376.7,755.8 L1377.1,779.7 L1377.4,793.3 L1377.8,814.7 L1378.2,800.7 L1378.5,792.0 L1378.9,788.3 L1379.2,820.4 L1379.6,775.2 L1380.0,820.4 L1380.3,820.4 L1380.7,793.3 L1381.0,813.0 L1381.4,817.4 L1381.8,778.3 L1382.1,820.4 L1382.5,777.8 L1382.8,774.1 L1383.2,795.3 L1383.6,791.8 L1383.9,820.4 L1384.3,820.4 L1384.6,820.4 L1385.0,785.1 L1385.4,776.1 L1385.7,795.8 L1386.1,780.5 L1386.4,754.9 L1386.8,820.4 L1387.2,801.3 L1387.5,762.8 L1387.9,820.4 L1388.2,796.5 L1388.6,795.4 L1389.0,820.4 L1389.3,767.0 L1389.7,811.9 L1390.0,775.4 L1390.4,785.0 L1390.8,784.6 L1391.1,788.5 L1391.5,816.6 L1391.8,778.8 L1392.2,794.9 L1392.6,820.4 L1392.9,812.8 L1393.3,773.5 L1393.6,759.9 L1394.0,794.1 L1394.4,820.4 L1394.7,800.9 L1395.1,782.8 L1395.4,808.7 L1395.8,820.4 L1396.2,820.4 L1396.5,820.4 L1396.9,804.8 L1397.2,784.2 L1397.6,784.9 L1398.0,794.5 L1398.3,816.4 L1398.7,820.4 L1399.0,770.9 L1399.4,778.4 L1399.8,791.0 L1400.1,814.1 L1400.5,815.9 L1400.8,812.0 L1401.2,805.0 L1401.6,800.4 L1401.9,820.4 L1402.3,820.4 L1402.6,820.1 L1403.0,798.5 L1403.4,801.5 L1403.7,793.8 L1404.1,771.4 L1404.4,772.1 L1404.8,752.2 L1405.2,820.4 L1405.5,818.8 L1405.9,820.4 L1406.2,820.4 L1406.6,807.1 L1407.0,816.9 L1407.3,765.3 L1407.7,820.4 L1408.0,765.7 L1408.4,820.4 L1408.8,820.4 L1409.1,801.1 L1409.5,793.5 L1409.8,774.7 L1410.2,791.9 L1410.6,820.4 L1410.9,771.5 L1411.3,804.5 L1411.6,789.9 L1412.0,771.3 L1412.4,810.1 L1412.7,780.8 L1413.1,814.9 L1413.4,752.7 L1413.8,820.4 L1414.2,778.6 L1414.5,820.4 L1414.9,782.4 L1415.2,796.0 L1415.6,806.1 L1416.0,814.5 L1416.3,774.6 L1416.7,805.5 L1417.0,814.6 L1417.4,802.9 L1417.8,774.7 L1418.1,756.6 L1418.5,789.7 L1418.8,790.7 L1419.2,752.7 L1419.6,804.2 L1419.9,773.1 L1420.3,808.2 L1420.6,820.4 L1421.0,754.8 L1421.4,783.5 L1421.7,819.1 L1422.1,791.2 L1422.4,792.2 L1422.8,795.5 L1423.2,820.4 L1423.5,820.4 L1423.9,815.1 L1424.2,780.4 L1424.6,796.3 L1425.0,811.4 L1425.3,819.6 L1425.7,799.2 L1426.0,777.3 L1426.4,757.7 L1426.8,777.3 L1427.1,767.0 L1427.5,784.9 L1427.8,786.5 L1428.2,764.5 L1428.6,820.4 L1428.9,820.4 L1429.3,776.9 L1429.6,758.8 L1430.0,797.8 L1430.4,793.3 L1430.7,788.0 L1431.1,820.4 L1431.4,781.8 L1431.8,774.8 L1432.2,820.4 L1432.5,786.8 L1432.9,754.5 L1433.2,775.7 L1433.6,793.5 L1434.0,776.7 L1434.3,820.4 L1434.7,810.8 L1435.0,797.7 L1435.4,805.5 L1435.8,820.4 L1436.1,786.3 L1436.5,773.8 L1436.8,776.2 L1437.2,820.4 L1437.6,792.5 L1437.9,790.3 L1438.3,798.1 L1438.6,797.0 L1439.0,791.8 L1439.4,776.5 L1439.7,819.9 L1440.1,774.6 L1440.4,759.8 L1440.8,820.4 L1441.2,810.5 L1441.5,798.6 L1441.9,779.0 L1442.2,820.4 L1442.6,768.7 L1443.0,820.4 L1443.3,820.4 L1443.7,791.9 L1444.0,778.4 L1444.4,820.4 L1444.8,788.7 L1445.1,802.8 L1445.5,763.6 L1445.8,781.3 L1446.2,778.2 L1446.6,820.4 L1446.9,800.2 L1447.3,806.4 L1447.6,808.8 L1448.0,820.4 L1448.4,761.1 L1448.7,771.4 L1449.1,784.7 L1449.4,781.7 L1449.8,789.4 L1450.2,760.7 L1450.5,764.0 L1450.9,816.3 L1451.2,797.0 L1451.6,788.8 L1452.0,789.8 L1452.3,806.7 L1452.7,791.3 L1453.0,812.2 L1453.4,820.4 L1453.8,816.1 L1454.1,799.8 L1454.5,763.9 L1454.8,786.7 L1455.2,818.9 L1455.6,790.6 L1455.9,751.3 L1456.3,768.6 L1456.6,820.4 L1457.0,784.7 L1457.4,763.7 L1457.7,785.1 L1458.1,752.0 L1458.4,781.9 L1458.8,781.8 L1459.2,795.4 L1459.5,772.2 L1459.9,808.9 L1460.2,777.2 L1460.6,820.4 L1461.0,820.4 L1461.3,770.7 L1461.7,820.4 L1462.0,812.8 L1462.4,780.6 L1462.8,781.7 L1463.1,772.0 L1463.5,767.0 L1463.8,818.1 L1464.2,778.7 L1464.6,781.9 L1464.9,774.4 L1465.3,788.4 L1465.6,800.4 L1466.0,765.5 L1466.4,803.4 L1466.7,768.7 L1467.1,820.4 L1467.4,769.5 L1467.8,820.4 L1468.2,792.2 L1468.5,776.0 L1468.9,797.0 L1469.2,790.4 L1469.6,777.3 L1470.0,820.4 L1470.3,820.4 L1470.7,757.7 L1471.0,820.4 L1471.4,820.4 L1471.8,788.6 L1472.1,820.4 L1472.5,820.4 L1472.8,765.7 L1473.2,795.7 L1473.6,782.7 L1473.9,809.2 L1474.3,820.4 L1474.6,813.5 L1475.0,789.3 L1475.4,770.7 L1475.7,778.7 L1476.1,820.4 L1476.4,820.4 L1476.8,820.4 L1477.2,796.5 L1477.5,798.0 L1477.9,820.4 L1478.2,786.6 L1478.6,798.2 L1479.0,772.2 L1479.3,806.5 L1479.7,792.8 L1480.0,779.8 L1480.4,791.3 L1480.8,766.5 L1481.1,764.5 L1481.5,820.4 L1481.8,755.7 L1482.2,794.2 L1482.6,766.0 L1482.9,750.6 L1483.3,792.6 L1483.6,820.4 L1484.0,769.9 L1484.4,744.4 L1484.7,781.9 L1485.1,750.7 L1485.4,754.3 L1485.8,797.4 L1486.2,809.1 L1486.5,747.3 L1486.9,712.3 L1487.2,595.9 L1487.6,595.9 L1488.0,595.9 L1488.3,595.9 L1488.7,662.8 L1489.0,650.3 L1489.4,661.3 L1489.8,651.4 L1490.1,756.5 L1490.5,702.2 L1490.8,681.4 L1491.2,703.0 L1491.6,750.6 L1491.9,744.8 L1492.3,731.4 L1492.6,685.8 L1493.0,715.4 L1493.4,751.1 L1493.7,700.4 L1494.1,723.5 L1494.4,777.1 L1494.8,709.1 L1495.2,688.4 L1495.5,700.9 L1495.9,681.4 L1496.2,734.0 L1496.6,818.1 L1497.0,722.8 L1497.3,725.0 L1497.7,769.2 L1498.0,715.4 L1498.4,744.2 L1498.8,729.6 L1499.1,731.8 L1499.5,749.3 L1499.8,757.1 L1500.2,729.1 L1500.6,771.9 L1500.9,754.3 L1501.3,734.8 L1501.6,766.5 L1502.0,739.2 L1502.4,733.6 L1502.7,766.8 L1503.1,741.7 L1503.4,726.8 L1503.8,692.1 L1504.2,820.4 L1504.5,720.0 L1504.9,716.7 L1505.2,751.6 L1505.6,820.4 L1506.0,692.1 L1506.3,789.1 L1506.7,775.0 L1507.0,793.2 L1507.4,765.6 L1507.8,766.2 L1508.1,786.4 L1508.5,805.6 L1508.8,762.0 L1509.2,792.3 L1509.6,765.3 L1509.9,820.4 L1510.3,726.7 L1510.6,757.5 L1511.0,820.4 L1511.4,804.9 L1511.7,770.1 L1512.1,792.0 L1512.4,780.6 L1512.8,818.2 L1513.2,820.4 L1513.5,799.4 L1513.9,770.5 L1514.2,810.1 L1514.6,820.4 L1515.0,768.7 L1515.3,810.8 L1515.7,779.8 L1516.0,819.8 L1516.4,787.3 L1516.8,797.7 L1517.1,782.7 L1517.5,792.9 L1517.8,790.1 L1518.2,745.7 L1518.6,777.3 L1518.9,809.0 L1519.3,820.4 L1519.6,803.4 L1520.0,798.0 L1520.4,787.8 L1520.7,796.8 L1521.1,770.6 L1521.4,786.9 L1521.8,806.5 L1522.2,785.7 L1522.5,820.4 L1522.9,820.4 L1523.2,810.3 L1523.6,802.0 L1524.0,820.4 L1524.3,817.2 L1524.7,799.3 L1525.0,820.4 L1525.4,802.7 L1525.8,789.0 L1526.1,755.3 L1526.5,774.4 L1526.8,820.4 L1527.2,777.2 L1527.6,767.1 L1527.9,762.1 L1528.3,805.7 L1528.6,796.0 L1529.0,820.4 L1529.4,820.4 L1529.7,820.4 L1530.1,816.4 L1530.4,801.0 L1530.8,820.4 L1531.2,817.6 L1531.5,795.6 L1531.9,820.4 L1532.2,755.6 L1532.6,787.1 L1533.0,820.4 L1533.3,820.0 L1533.7,802.3 L1534.0,820.4 L1534.4,778.9 L1534.8,745.5 L1535.1,772.1 L1535.5,767.7 L1535.8,770.1 L1536.2,807.2 L1536.6,778.0 L1536.9,820.4 L1537.3,820.4 L1537.6,820.4 L1538.0,816.0 L1538.4,766.6 L1538.7,779.6 L1539.1,813.9 L1539.4,820.4 L1539.8,818.8 L1540.2,820.4 L1540.5,820.4 L1540.9,820.4 L1541.2,782.3 L1541.6,820.4 L1542.0,820.4 L1542.3,775.0 L1542.7,770.7 L1543.0,789.5 L1543.4,792.4 L1543.8,771.8 L1544.1,794.1 L1544.5,820.4 L1544.8,810.6 L1545.2,751.0 L1545.6,820.4 L1545.9,800.0 L1546.3,819.1 L1546.6,761.1 L1547.0,794.9 L1547.4,780.3 L1547.7,777.9 L1548.1,820.4 L1548.4,751.0 L1548.8,766.7 L1549.2,788.7 L1549.5,781.6 L1549.9,810.5 L1550.2,798.6 L1550.6,775.3 L1551.0,818.3 L1551.3,820.4 L1551.7,803.4 L1552.0,787.6 L1552.4,820.4 L1552.8,820.4 L1553.1,802.0 L1553.5,820.4 L1553.8,820.4 L1554.2,772.3 L1554.6,793.1 L1554.9,817.5 L1555.3,786.0 L1555.6,769.6 L1556.0,820.4 L1556.4,820.4 L1556.7,798.0 L1557.1,811.3 L1557.4,816.8 L1557.8,820.4 L1558.2,820.4 L1558.5,820.4 L1558.9,775.9 L1559.2,812.2 L1559.6,775.7 L1560.0,789.8 L1560.3,814.1 L1560.7,820.4 L1561.0,797.7 L1561.4,820.4 L1561.8,820.4 L1562.1,820.4 L1562.5,775.5 L1562.8,788.2 L1563.2,820.4 L1563.6,779.2 L1563.9,815.1 L1564.3,783.7 L1564.6,807.8 L1565.0,795.3 L1565.4,820.4 L1565.7,764.3 L1566.1,820.4 L1566.4,789.6 L1566.8,801.9 L1567.2,788.4 L1567.5,803.3 L1567.9,799.0 L1568.2,810.9 L1568.6,790.0 L1569.0,820.4 L1569.3,807.1 L1569.7,791.4 L1570.0,798.3 L1570.4,755.2 L1570.8,820.3 L1571.1,787.1 L1571.5,820.4 L1571.8,796.5 L1572.2,772.5 L1572.6,816.5 L1572.9,802.0 L1573.3,820.4 L1573.6,820.4 L1574.0,784.2 L1574.4,820.4 L1574.7,820.4 L1575.1,820.4 L1575.4,820.4 L1575.8,776.1 L1576.2,775.3 L1576.5,778.5 L1576.9,772.1 L1577.2,777.6 L1577.6,820.4 L1578.0,820.4 L1578.3,797.3 L1578.7,800.7 L1579.0,763.9 L1579.4,792.4 L1579.8,768.8 L1580.1,795.8 L1580.5,820.4 L1580.8,789.6 L1581.2,820.4 L1581.6,816.8 L1581.9,774.4 L1582.3,767.1 L1582.6,806.2 L1583.0,820.4 L1583.4,801.1 L1583.7,820.4 L1584.1,763.1 L1584.4,781.0 L1584.8,758.3 L1585.2,801.4 L1585.5,784.4 L1585.9,820.4 L1586.2,795.4 L1586.6,795.8 L1587.0,820.4 L1587.3,757.1 L1587.7,816.9 L1588.0,756.5 L1588.4,814.4 L1588.8,820.4 L1589.1,820.4 L1589.5,820.4 L1589.8,780.0 L1590.2,820.4 L1590.6,768.5 L1590.9,819.1 L1591.3,767.6 L1591.6,800.7 L1592.0,810.9 L1592.4,819.2 L1592.7,799.6 L1593.1,778.7 L1593.4,820.4 L1593.8,765.7 L1594.2,820.4 L1594.5,820.4 L1594.9,798.5 L1595.2,801.4 L1595.6,785.1 L1596.0,755.3 L1596.3,798.9 L1596.7,816.7 L1597.0,758.4 L1597.4,820.4 L1597.8,804.9 L1598.1,754.9 L1598.5,784.2 L1598.8,766.6 L1599.2,779.2 L1599.6,782.7 L1599.9,807.5 L1600.3,789.9 L1600.6,791.8 L1601.0,799.5 L1601.4,808.3 L1601.7,820.4 L1602.1,820.4 L1602.4,809.1 L1602.8,806.6 L1603.2,785.0 L1603.5,787.6 L1603.9,776.1 L1604.2,820.4 L1604.6,812.0 L1605.0,759.6 L1605.3,796.8 L1605.7,792.0 L1606.0,820.4 L1606.4,820.4 L1606.8,772.8 L1607.1,771.1 L1607.5,802.2 L1607.8,800.3 L1608.2,820.4 L1608.6,800.3 L1608.9,793.3 L1609.3,794.3 L1609.6,820.4 L1610.0,779.7 L1610.4,779.2 L1610.7,803.7 L1611.1,795.2 L1611.4,772.4 L1611.8,784.9 L1612.2,768.1 L1612.5,807.0 L1612.9,820.4 L1613.2,769.4 L1613.6,774.0 L1614.0,779.4 L1614.3,798.8 L1614.7,816.1 L1615.0,820.4 L1615.4,786.4 L1615.8,806.2 L1616.1,794.8 L1616.5,789.3 L1616.8,790.9 L1617.2,820.4 L1617.6,820.4 L1617.9,820.4 L1618.3,815.4 L1618.6,812.3 L1619.0,820.4 L1619.4,819.8 L1619.7,766.9 L1620.1,758.7 L1620.4,820.4 L1620.8,820.4 L1621.2,815.7 L1621.5,792.3 L1621.9,812.9 L1622.2,819.7 L1622.6,817.5 L1623.0,820.4 L1623.3,820.4 L1623.7,815.1 L1624.0,780.6 L1624.4,820.4 L1624.8,810.2 L1625.1,810.2 L1625.5,792.9 L1625.8,820.4 L1626.2,820.4 L1626.6,763.9 L1626.9,820.4 L1627.3,762.5 L1627.6,805.3 L1628.0,799.0 L1628.4,752.5 L1628.7,798.4 L1629.1,786.0 L1629.4,778.8 L1629.8,820.4 L1630.2,797.3 L1630.5,791.0 L1630.9,820.4 L1631.2,817.3 L1631.6,798.4 L1632.0,778.7 L1632.3,781.4 L1632.7,797.9 L1633.0,800.9 L1633.4,820.4 L1633.8,771.6 L1634.1,805.2 L1634.5,816.5 L1634.8,782.1 L1635.2,797.4 L1635.6,809.8 L1635.9,791.2 L1636.3,785.8 L1636.6,797.3 L1637.0,788.5 L1637.4,777.5 L1637.7,820.4 L1638.1,775.4 L1638.4,792.3 L1638.8,811.8 L1639.2,820.4 L1639.5,820.4 L1639.9,820.4 L1640.2,785.3 L1640.6,820.4 L1641.0,757.6 L1641.3,820.4 L1641.7,820.4 L1642.0,773.6 L1642.4,820.4 L1642.8,798.4 L1643.1,820.4 L1643.5,820.4 L1643.8,820.4 L1644.2,771.7 L1644.6,806.0 L1644.9,800.3 L1645.3,774.9 L1645.6,815.8 L1646.0,818.5 L1646.4,796.6 L1646.7,790.5 L1647.1,797.2 L1647.4,789.5 L1647.8,752.7 L1648.2,797.9 L1648.5,820.4 L1648.9,820.4 L1649.2,784.0 L1649.6,801.6 L1650.0,805.9 L1650.3,768.5 L1650.7,812.1 L1651.0,769.0 L1651.4,820.4 L1651.8,806.7 L1652.1,786.7 L1652.5,809.5 L1652.8,790.7 L1653.2,785.3 L1653.6,805.6 L1653.9,820.4 L1654.3,808.5 L1654.6,820.4 L1655.0,790.6 L1655.4,808.9 L1655.7,777.3 L1656.1,789.4 L1656.4,820.4 L1656.8,820.4 L1657.2,790.4 L1657.5,790.7 L1657.9,773.3 L1658.2,816.4 L1658.6,816.6 L1659.0,802.0 L1659.3,799.7 L1659.7,790.2 L1660.0,800.2 L1660.4,799.9 L1660.8,786.8 L1661.1,820.4 L1661.5,805.4 L1661.8,820.4 L1662.2,820.4 L1662.6,813.4 L1662.9,800.2 L1663.3,820.4 L1663.6,774.7 L1664.0,820.4 L1664.4,820.4 L1664.7,773.2 L1665.1,784.4 L1665.4,769.0 L1665.8,791.9 L1666.2,783.8 L1666.5,806.1 L1666.9,805.4 L1667.2,774.9 L1667.6,795.5 L1668.0,781.6 L1668.3,800.2 L1668.7,819.5 L1669.0,820.4 L1669.4,779.7 L1669.8,804.5 L1670.1,804.9 L1670.5,779.6 L1670.8,820.4 L1671.2,781.9 L1671.6,775.6 L1671.9,813.2 L1672.3,820.4 L1672.6,759.7 L1673.0,813.5 L1673.4,820.4 L1673.7,820.4 L1674.1,819.4 L1674.4,769.5 L1674.8,796.1 L1675.2,797.9 L1675.5,795.0 L1675.9,761.1 L1676.2,819.8 L1676.6,761.3 L1677.0,811.1 L1677.3,774.7 L1677.7,792.2 L1678.0,791.8 L1678.4,820.4 L1678.8,764.3 L1679.1,787.1 L1679.5,810.3 L1679.8,778.0 L1680.2,820.4 L1680.6,803.3 L1680.9,770.1 L1681.3,786.3 L1681.6,820.4 L1682.0,820.4 L1682.4,793.0 L1682.7,768.9 L1683.1,785.0 L1683.4,815.8 L1683.8,812.7 L1684.2,787.5 L1684.5,813.6 L1684.9,820.4 L1685.2,808.2 L1685.6,810.9 L1686.0,770.3 L1686.3,820.4 L1686.7,820.4 L1687.0,820.4 L1687.4,779.7 L1687.8,811.9 L1688.1,797.6 L1688.5,783.6 L1688.8,760.1 L1689.2,820.4 L1689.6,802.4 L1689.9,800.7 L1690.3,820.4 L1690.6,779.2 L1691.0,770.8 L1691.4,787.1 L1691.7,820.4 L1692.1,817.1 L1692.4,784.1 L1692.8,820.4 L1693.2,774.1 L1693.5,812.5 L1693.9,757.9 L1694.2,798.2 L1694.6,787.5 L1695.0,777.2 L1695.3,820.4 L1695.7,814.5 L1696.0,820.4 L1696.4,788.1 L1696.8,787.2 L1697.1,802.8 L1697.5,820.4 L1697.8,756.9 L1698.2,788.8 L1698.6,804.0 L1698.9,820.4 L1699.3,804.4 L1699.6,761.4 L1700.0,820.4 L1700.4,814.0 L1700.7,820.4 L1701.1,787.0 L1701.4,812.1 L1701.8,820.4 L1702.2,820.4 L1702.5,774.6 L1702.9,766.3 L1703.2,776.4 L1703.6,787.8 L1704.0,775.5 L1704.3,804.4 L1704.7,820.4 L1705.0,820.4 L1705.4,786.1 L1705.8,788.5 L1706.1,798.5 L1706.5,820.4 L1706.8,820.4 L1707.2,813.2 L1707.6,805.9 L1707.9,792.4 L1708.3,820.4 L1708.6,802.3 L1709.0,820.4 L1709.4,820.4 L1709.7,820.4 L1710.1,778.2 L1710.4,752.2 L1710.8,769.8 L1711.2,813.7 L1711.5,818.8 L1711.9,813.1 L1712.2,789.2 L1712.6,813.7 L1713.0,818.3 L1713.3,812.2 L1713.7,787.5 L1714.0,768.9 L1714.4,799.9 L1714.8,820.4 L1715.1,786.2 L1715.5,803.3 L1715.8,766.1 L1716.2,820.4 L1716.6,820.4 L1716.9,811.3 L1717.3,784.0 L1717.6,802.4 L1718.0,820.4 L1718.4,810.8 L1718.7,761.6 L1719.1,802.2 L1719.4,774.7 L1719.8,767.1 L1720.2,812.7 L1720.5,820.4 L1720.9,803.7 L1721.2,761.4 L1721.6,757.0 L1722.0,820.4 L1722.3,820.4 L1722.7,787.2 L1723.0,786.8 L1723.4,786.6 L1723.8,790.4 L1724.1,771.1 L1724.5,810.0 L1724.8,820.4 L1725.2,820.4 L1725.6,820.4 L1725.9,768.1 L1726.3,789.9 L1726.6,803.3 L1727.0,820.4 L1727.4,791.9 L1727.7,797.1 L1728.1,776.7 L1728.4,773.5 L1728.8,798.8 L1729.2,748.3 L1729.5,789.2 L1729.9,820.4 L1730.2,777.4 L1730.6,820.4 L1731.0,789.9 L1731.3,772.1 L1731.7,820.4 L1732.0,805.4 L1732.4,820.4 L1732.8,820.4 L1733.1,797.3 L1733.5,820.4 L1733.8,820.4 L1734.2,820.4 L1734.6,820.4 L1734.9,799.8 L1735.3,803.8 L1735.6,820.4 L1736.0,820.4 L1736.4,766.2 L1736.7,820.4 L1737.1,820.4 L1737.4,820.4 L1737.8,774.5 L1738.2,764.7 L1738.5,820.4 L1738.9,807.5 L1739.2,770.7 L1739.6,770.3 L1740.0,820.4 L1740.3,818.1 L1740.7,778.5 L1741.0,820.4 L1741.4,795.9 L1741.8,819.4 L1742.1,770.3 L1742.5,820.4 L1742.8,820.4 L1743.2,775.2 L1743.6,788.7 L1743.9,816.4 L1744.3,777.7 L1744.6,820.4 L1745.0,817.0 L1745.4,820.4 L1745.7,785.5 L1746.1,766.2 L1746.4,820.4 L1746.8,787.6 L1747.2,771.5 L1747.5,789.0 L1747.9,820.4 L1748.2,820.4 L1748.6,755.6 L1749.0,799.8 L1749.3,820.4 L1749.7,820.4 L1750.0,814.0 L1750.4,794.2 L1750.8,793.1 L1751.1,752.6 L1751.5,801.1 L1751.8,753.6 L1752.2,798.7 L1752.6,749.9 L1752.9,820.4 L1753.3,820.4 L1753.6,820.4 L1754.0,805.9 L1754.4,820.4 L1754.7,751.6 L1755.1,770.7 L1755.4,800.3 L1755.8,793.8 L1756.2,820.4 L1756.5,820.4 L1756.9,820.4 L1757.2,792.4 L1757.6,759.5 L1758.0,810.7 L1758.3,798.4 L1758.7,810.4 L1759.0,820.4 L1759.4,768.9 L1759.8,782.7 L1760.1,800.3 L1760.5,787.8 L1760.8,803.3 L1761.2,749.7 L1761.6,785.9 L1761.9,805.9 L1762.3,770.1 L1762.6,820.4 L1763.0,771.3 L1763.4,783.2 L1763.7,814.3 L1764.1,820.4 L1764.4,775.1 L1764.8,795.2 L1765.2,776.6 L1765.5,820.4 L1765.9,752.4 L1766.2,783.7 L1766.6,775.6 L1767.0,807.1 L1767.3,751.1 L1767.7,812.0 L1768.0,756.7 L1768.4,810.2 L1768.8,814.3 L1769.1,815.8 L1769.5,800.0 L1769.8,763.8 L1770.2,802.5 L1770.6,777.0 L1770.9,805.2 L1771.3,781.1 L1771.6,811.5 L1772.0,820.4 L1772.4,782.8 L1772.7,793.4 L1773.1,810.8 L1773.4,820.4 L1773.8,771.7 L1774.2,775.6 L1774.5,781.6 L1774.9,811.5 L1775.2,820.4 L1775.6,814.3 L1776.0,820.4 L1776.3,757.3 L1776.7,820.4 L1777.0,769.1 L1777.4,792.4 L1777.8,768.9 L1778.1,793.8 L1778.5,820.4 L1778.8,820.4 L1779.2,820.4 L1779.6,819.9 L1779.9,820.4 L1780.3,816.6 L1780.6,787.2 L1781.0,801.5 L1781.4,820.4 L1781.7,820.4 L1782.1,820.4 L1782.4,786.6 L1782.8,805.8 L1783.2,820.4 L1783.5,820.4 L1783.9,778.5 L1784.2,791.2 L1784.6,820.4 L1785.0,815.4 L1785.3,776.9 L1785.7,820.4 L1786.0,808.5 L1786.4,800.2 L1786.8,816.5 L1787.1,820.4 L1787.5,799.6 L1787.8,783.2 L1788.2,819.9 L1788.6,769.7 L1788.9,765.7 L1789.3,816.3 L1789.6,820.4 L1790.0,820.4 L1790.4,805.6 L1790.7,757.3 L1791.1,774.7 L1791.4,809.0 L1791.8,780.1 L1792.2,761.7 L1792.5,763.7 L1792.9,799.0 L1793.2,816.5 L1793.6,798.8 L1794.0,820.4 L1794.3,807.5 L1794.7,820.4 L1795.0,785.9 L1795.4,767.4 L1795.8,820.4 L1796.1,775.6 L1796.5,820.4 L1796.8,820.4 L1797.2,793.3 L1797.6,768.9 L1797.9,789.0 L1798.3,795.0 L1798.6,816.3 L1799.0,802.2 L1799.4,800.5 L1799.7,767.6 L1800.1,760.2 L1800.4,785.8 L1800.8,820.4 L1801.2,787.3 L1801.5,820.4 L1801.9,820.4 L1802.2,803.6 L1802.6,790.4 L1803.0,776.1 L1803.3,781.7 L1803.7,780.9 L1804.0,820.4 L1804.4,780.1 L1804.8,757.1 L1805.1,778.1 L1805.5,761.2 L1805.8,796.1 L1806.2,805.8 L1806.6,820.4 L1806.9,820.4 L1807.3,757.0 L1807.6,812.5 L1808.0,820.4 L1808.4,800.6 L1808.7,820.4 L1809.1,786.9 L1809.4,815.4 L1809.8,782.6 L1810.2,802.3 L1810.5,793.4 L1810.9,776.6 L1811.2,819.1 L1811.6,786.0 L1812.0,805.3 L1812.3,800.1 L1812.7,800.7 L1813.0,820.4 L1813.4,795.8 L1813.8,798.2 L1814.1,771.2 L1814.5,820.4 L1814.8,820.4 L1815.2,819.5 L1815.6,782.3 L1815.9,769.2 L1816.3,801.3 L1816.6,820.4 L1817.0,820.4 L1817.4,799.5 L1817.7,770.2 L1818.1,820.4 L1818.4,818.0 L1818.8,781.3 L1819.2,803.5 L1819.5,811.5 L1819.9,820.4 L1820.2,782.5 L1820.6,816.9 L1821.0,820.4 L1821.3,820.4 L1821.7,779.9 L1822.0,809.0 L1822.4,820.4 L1822.8,801.5 L1823.1,795.7 L1823.5,774.2 L1823.8,820.4 L1824.2,820.4 L1824.6,802.7 L1824.9,752.0 L1825.3,808.9 L1825.6,788.4 L1826.0,797.5 L1826.4,816.2 L1826.7,787.7 L1827.1,767.3 L1827.4,810.0 L1827.8,820.4 L1828.2,820.4 L1828.5,820.4 L1828.9,799.4 L1829.2,792.8 L1829.6,814.2 L1830.0,751.7 L1830.3,820.4 L1830.7,782.3 L1831.0,762.2 L1831.4,820.4 L1831.8,757.2 L1832.1,772.2 L1832.5,764.5 L1832.8,805.1 L1833.2,820.4 L1833.6,806.7 L1833.9,820.4 L1834.3,820.4 L1834.6,820.4 L1835.0,797.2 L1835.4,777.3 L1835.7,773.6 L1836.1,810.8 L1836.4,765.6 L1836.8,809.1 L1837.2,754.9 L1837.5,755.3 L1837.9,820.4 L1838.2,771.0 L1838.6,770.4 L1839.0,820.4 L1839.3,820.4 L1839.7,768.2 L1840.0,820.4 L1840.4,820.4 L1840.8,780.5 L1841.1,803.6 L1841.5,772.8 L1841.8,820.4 L1842.2,785.0 L1842.6,779.9 L1842.9,775.8 L1843.3,800.9 L1843.6,816.5 L1844.0,789.7" fill="none" stroke="#fafafa" stroke-width="1.1" clip-path="url(#circlip)"/>
<line x1="1487.6" y1="457" x2="1487.6" y2="811" stroke="#e8e060" stroke-width="1" stroke-dasharray="1.5,1.5"/>
<line x1="1487.8" y1="591.4" x2="1487.8" y2="660" stroke="#f4f0a0" stroke-width="1.6" />
<circle cx="1488" cy="591.4" r="5.9" fill="#ffff10" />
<circle cx="1500.6" cy="743.8" r="5.6" fill="#e01010" />
<text x="1316.02" y="463.60" font-size="19.19" fill="#fff" textLength="43.73" lengthAdjust="spacingAndGlyphs" style="">-10.0</text>
<text x="1316.02" y="534.85" font-size="19.19" fill="#fff" textLength="43.73" lengthAdjust="spacingAndGlyphs" style="">-20.0</text>
<text x="1316.02" y="606.10" font-size="19.19" fill="#fff" textLength="43.73" lengthAdjust="spacingAndGlyphs" style="">-30.0</text>
<text x="1316.02" y="677.35" font-size="19.19" fill="#fff" textLength="43.73" lengthAdjust="spacingAndGlyphs" style="">-40.0</text>
<text x="1316.02" y="748.60" font-size="19.19" fill="#fff" textLength="43.73" lengthAdjust="spacingAndGlyphs" style="">-50.0</text>
<text x="1316.02" y="818.10" font-size="19.19" fill="#fff" textLength="43.73" lengthAdjust="spacingAndGlyphs" style="">-60.0</text>
<text x="1381.39" y="833.00" font-size="14.53" fill="#fff" textLength="21.01" lengthAdjust="spacingAndGlyphs" style="">-60</text>
<text x="1445.09" y="833.00" font-size="14.53" fill="#fff" textLength="21.01" lengthAdjust="spacingAndGlyphs" style="">-20</text>
<text x="1511.19" y="833.00" font-size="14.53" fill="#fff" textLength="16.17" lengthAdjust="spacingAndGlyphs" style="">20</text>
<text x="1574.89" y="833.00" font-size="14.53" fill="#fff" textLength="16.17" lengthAdjust="spacingAndGlyphs" style="">60</text>
<text x="1634.36" y="833.00" font-size="14.53" fill="#fff" textLength="24.25" lengthAdjust="spacingAndGlyphs" style="">100</text>
<text x="1698.06" y="833.00" font-size="14.53" fill="#fff" textLength="24.25" lengthAdjust="spacingAndGlyphs" style="">140</text>
<text x="1761.76" y="833.00" font-size="14.53" fill="#fff" textLength="24.25" lengthAdjust="spacingAndGlyphs" style="">180</text>
<text x="1825.64" y="833.00" font-size="14.53" fill="#fff" textLength="24.25" lengthAdjust="spacingAndGlyphs" style="">220</text>
<text x="1413.24" y="851.50" font-size="14.53" fill="#fff" textLength="21.01" lengthAdjust="spacingAndGlyphs" style="">-40</text>
<text x="1483.45" y="851.50" font-size="14.53" fill="#fff" textLength="8.08" lengthAdjust="spacingAndGlyphs" style="">0</text>
<text x="1543.24" y="851.50" font-size="14.53" fill="#fff" textLength="16.17" lengthAdjust="spacingAndGlyphs" style="">40</text>
<text x="1606.80" y="851.50" font-size="14.53" fill="#fff" textLength="16.17" lengthAdjust="spacingAndGlyphs" style="">80</text>
<text x="1666.21" y="851.50" font-size="14.53" fill="#fff" textLength="24.25" lengthAdjust="spacingAndGlyphs" style="">120</text>
<text x="1729.91" y="851.50" font-size="14.53" fill="#fff" textLength="24.25" lengthAdjust="spacingAndGlyphs" style="">160</text>
<text x="1793.79" y="851.50" font-size="14.53" fill="#fff" textLength="24.25" lengthAdjust="spacingAndGlyphs" style="">200</text>
<text transform="translate(1290.00,703.00) rotate(-90)" x="-1.67" y="0" font-size="21.08" fill="#fff" textLength="138.48" lengthAdjust="spacingAndGlyphs" style="">Magnitude (dB)</text>
<text x="1495.33" y="880.10" font-size="20.06" fill="#fff" textLength="222.90" lengthAdjust="spacingAndGlyphs" style="">Distance Difference (km)</text>
</svg>
</body></html>
